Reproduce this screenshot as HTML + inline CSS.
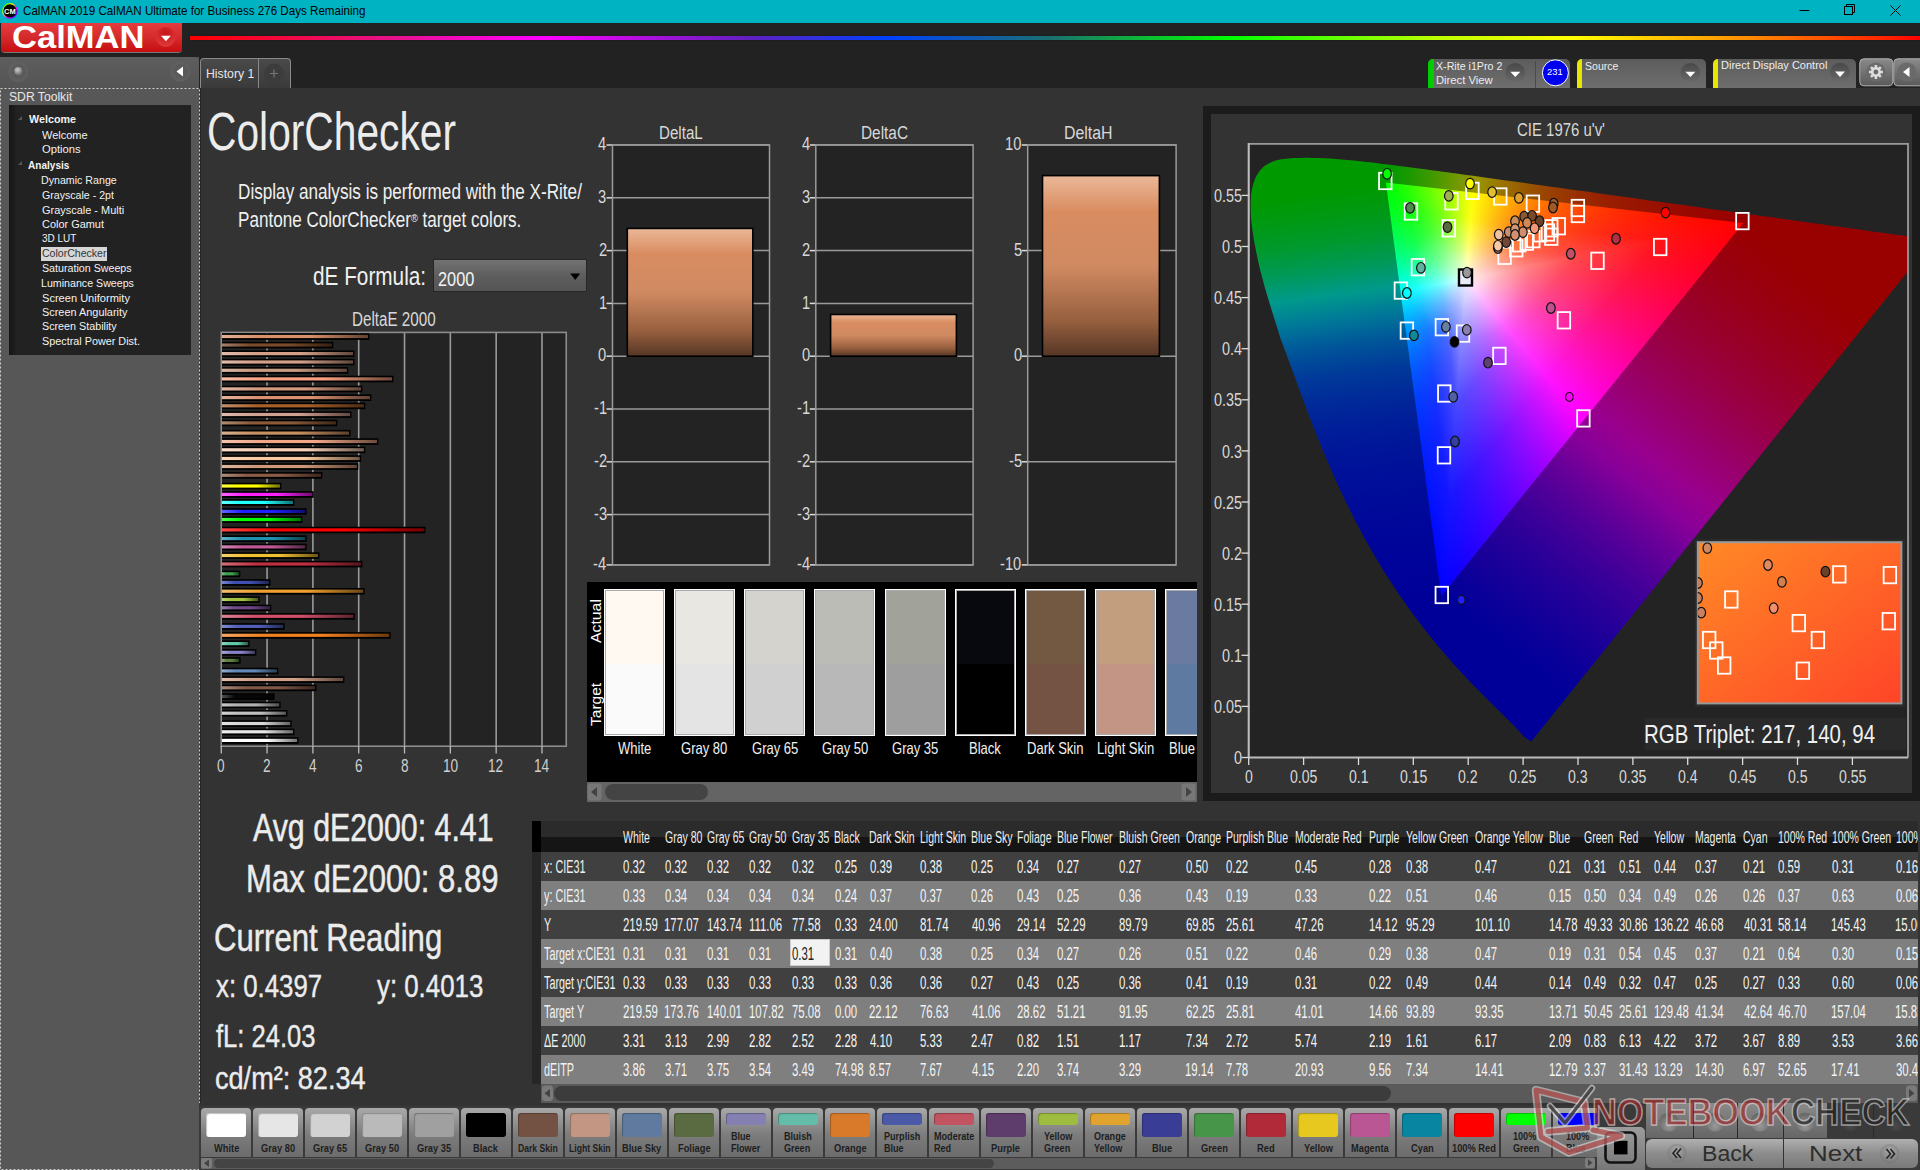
<!DOCTYPE html><html><head><meta charset="utf-8"><style>
html,body{margin:0;padding:0;width:1920px;height:1170px;overflow:hidden;background:#333;font-family:"Liberation Sans",sans-serif}
.t{position:absolute;white-space:nowrap;line-height:1;transform-origin:0 0}
.a{position:absolute}
</style></head><body>
<div style="position:absolute;left:0px;top:0px;width:1920px;height:23px;background:#00b3c3"></div>
<svg class="a" style="left:0;top:0" width="30" height="23"><defs><linearGradient id="ring" x1="0" y1="0" x2="1" y2="1"><stop offset="0" stop-color="#0f0"/><stop offset=".35" stop-color="#ff0"/><stop offset=".6" stop-color="#f0f"/><stop offset="1" stop-color="#00f"/></linearGradient></defs><circle cx="9.9" cy="10.9" r="7.2" fill="#000" stroke="url(#ring)" stroke-width="1.2"/><text x="9.9" y="13.6" font-family="Liberation Sans" font-weight="bold" font-size="7.5" fill="#fff" text-anchor="middle">CM</text></svg>
<div class="t" style="left:23.42px;top:5.71px;font-size:11.92px;transform:scaleX(0.9747);color:#000;">CalMAN 2019 CalMAN Ultimate for Business 276 Days Remaining</div>
<svg class="a" style="left:1790px;top:0" width="130" height="23"><g stroke="#000" stroke-width="1" fill="none"><line x1="1799.5" y1="10.5" x2="1809.5" y2="10.5" transform="translate(-1790,0)"/><rect x="54.5" y="6.5" width="8" height="8"/><path d="M56.5 6.5 V4.5 H64.5 V12.5 H62.5"/><path d="M100.5 5.5 L110.5 15.5 M110.5 5.5 L100.5 15.5"/></g></svg>
<div style="position:absolute;left:0px;top:23px;width:1920px;height:35px;background:#222"></div>
<div style="position:absolute;left:1px;top:23px;width:181px;height:29px;background:linear-gradient(#e53c3e,#d42a2c 50%,#c70d0f);border-radius:0 0 4px 4px;box-shadow:0 1px 0 #777"></div>
<div class="t" style="left:12.12px;top:21.65px;font-size:31.25px;transform:scaleX(1.1056);color:#fff;font-weight:bold;">CalMAN</div>
<svg class="a" style="left:150px;top:24px" width="32" height="28"><defs><radialGradient id="dd" cx=".5" cy=".3" r=".7"><stop offset="0" stop-color="#c8141a"/><stop offset="1" stop-color="#e03a3c"/></radialGradient></defs><circle cx="15.6" cy="13" r="9.9" fill="url(#dd)"/><path d="M11 11.8 H20.8 L15.9 17.2Z" fill="#fff"/></svg>
<div style="position:absolute;left:190px;top:36px;width:1730px;height:4px;background:linear-gradient(to right,#f00 0px,#e8128a 200px,#f0f 352px,#6020c0 560px,#0040ff 697px,#1a7070 860px,#00ff00 1041px,#c0ff00 1250px,#ffff00 1381px,#ff9900 1540px,#ff2000 1700px,#f00 1730px);box-shadow:0 0 1px #000"></div>
<div style="position:absolute;left:0px;top:57px;width:199px;height:1113px;background:#575757"></div>
<div style="position:absolute;left:0px;top:57px;width:199px;height:31px;background:linear-gradient(#5e5e5e,#545454);border-radius:0 6px 0 0"></div>
<svg class="a" style="left:0;top:57px" width="200" height="31"><defs><radialGradient id="ball" cx=".4" cy=".35" r=".6"><stop offset="0" stop-color="#ccc"/><stop offset="1" stop-color="#777"/></radialGradient><radialGradient id="cb" cx=".5" cy=".5" r=".5"><stop offset=".6" stop-color="#5a5a5a"/><stop offset="1" stop-color="#626262"/></radialGradient></defs><circle cx="18.5" cy="15" r="10" fill="url(#cb)"/><circle cx="18.3" cy="14" r="4" fill="url(#ball)"/><circle cx="180.5" cy="14.5" r="10" fill="url(#cb)"/><path d="M176.5 14.5 L183 9.5 V19.5Z" fill="#fff"/></svg>
<div class="t" style="left:8.55px;top:90.30px;font-size:13.23px;transform:scaleX(0.9196);color:#e8e8e8;">SDR Toolkit</div>
<div style="position:absolute;left:9px;top:105px;width:182px;height:250px;background:linear-gradient(to right,#151515,#222 8px,#222)"></div>
<div class="t" style="left:28.70px;top:114.45px;font-size:11.05px;transform:scaleX(0.9741);color:#f2f2f2;font-weight:bold;">Welcome</div>
<div class="t" style="left:42.25px;top:130.45px;font-size:11.05px;transform:scaleX(0.9936);color:#f2f2f2;">Welcome</div>
<div class="t" style="left:41.79px;top:144.35px;font-size:11.05px;transform:scaleX(1.0169);color:#f2f2f2;">Options</div>
<div class="t" style="left:28.45px;top:159.65px;font-size:11.05px;transform:scaleX(0.9109);color:#f2f2f2;font-weight:bold;">Analysis</div>
<div class="t" style="left:41.45px;top:175.45px;font-size:11.05px;transform:scaleX(0.9635);color:#f2f2f2;">Dynamic Range</div>
<div class="t" style="left:41.77px;top:189.55px;font-size:11.05px;transform:scaleX(0.9598);color:#f2f2f2;">Grayscale - 2pt</div>
<div class="t" style="left:41.75px;top:204.65px;font-size:11.05px;transform:scaleX(0.9917);color:#f2f2f2;">Grayscale - Multi</div>
<div class="t" style="left:41.75px;top:219.45px;font-size:11.05px;transform:scaleX(0.9892);color:#f2f2f2;">Color Gamut</div>
<div class="t" style="left:41.90px;top:233.35px;font-size:11.05px;transform:scaleX(0.9013);color:#f2f2f2;">3D LUT</div>
<div style="position:absolute;left:40.7px;top:247px;width:66.5px;height:13.6px;background:#d6d6d6"></div>
<div class="t" style="left:41.77px;top:248.15px;font-size:11.05px;transform:scaleX(0.9539);color:#333;">ColorChecker</div>
<div class="t" style="left:41.82px;top:263.25px;font-size:11.05px;transform:scaleX(0.9668);color:#f2f2f2;">Saturation Sweeps</div>
<div class="t" style="left:41.45px;top:277.65px;font-size:11.05px;transform:scaleX(0.9636);color:#f2f2f2;">Luminance Sweeps</div>
<div class="t" style="left:41.80px;top:292.65px;font-size:11.05px;transform:scaleX(1.0015);color:#f2f2f2;">Screen Uniformity</div>
<div class="t" style="left:41.81px;top:307.45px;font-size:11.05px;transform:scaleX(0.9871);color:#f2f2f2;">Screen Angularity</div>
<div class="t" style="left:41.82px;top:321.35px;font-size:11.05px;transform:scaleX(0.9728);color:#f2f2f2;">Screen Stability</div>
<div class="t" style="left:41.81px;top:336.25px;font-size:11.05px;transform:scaleX(0.9793);color:#f2f2f2;">Spectral Power Dist.</div>
<svg class="a" style="left:15px;top:112px" width="12" height="60"><path d="M7 8 L7 4 L3 8Z M7 53 L7 49 L3 53Z" fill="#555"/></svg>
<div style="position:absolute;left:199px;top:57px;width:1721px;height:31px;background:#222"></div>
<div style="position:absolute;left:199px;top:88px;width:1721px;height:1082px;background:#333"></div>
<div style="position:absolute;left:200px;top:88px;width:1px;height:1082px;background:#262626"></div>
<svg class="a" style="left:0;top:87px" width="201" height="1083"><rect x="0.5" y="1.5" width="199" height="1081" fill="none" stroke="#d0d0d0" stroke-width="1" stroke-dasharray="2 2"/></svg>
<div class="a" style="left:200px;top:58px;width:91px;height:30px;border:1px solid #8a8a8a;border-bottom:none;border-radius:4px 4px 0 0;background:linear-gradient(#4a4a4a,#3a3a3a);box-sizing:border-box"></div>
<div style="position:absolute;left:258px;top:59px;width:1px;height:29px;background:#8a8a8a"></div>
<div class="t" style="left:205.52px;top:67.89px;font-size:12.06px;transform:scaleX(1.0177);color:#e6e6e6;">History 1</div>
<svg class="a" style="left:259px;top:58px" width="32" height="30"><circle cx="15" cy="15.5" r="10" fill="#3c3c3c"/><path d="M15 11.5 V19.5 M11 15.5 H19" stroke="#777" stroke-width="1.2"/></svg>
<div class="a" style="left:1428.3px;top:58.5px;width:142.20000000000005px;height:29.5px;border-radius:5px 5px 0 0;background:linear-gradient(#5c5c5c,#6e6e6e);overflow:hidden"><div class="a" style="left:0;top:0;width:5.5px;height:100%;background:#0c0"></div></div>
<div class="a" style="left:1576.8px;top:58.5px;width:129.5px;height:29.5px;border-radius:5px 5px 0 0;background:linear-gradient(#5c5c5c,#6e6e6e);overflow:hidden"><div class="a" style="left:0;top:0;width:5.5px;height:100%;background:#e6e600"></div></div>
<div class="a" style="left:1712.8px;top:58.5px;width:143.0px;height:29.5px;border-radius:5px 5px 0 0;background:linear-gradient(#5c5c5c,#6e6e6e);overflow:hidden"><div class="a" style="left:0;top:0;width:5.5px;height:100%;background:#e6e600"></div></div>
<div style="position:absolute;left:1534.5px;top:61px;width:1.5px;height:27px;background:#4a4a4a"></div>
<div class="t" style="left:1436.43px;top:60.67px;font-size:10.90px;transform:scaleX(0.9785);color:#eee;">X-Rite i1Pro 2</div>
<div class="t" style="left:1435.80px;top:74.52px;font-size:10.61px;transform:scaleX(1.0584);color:#eee;">Direct View</div>
<div class="t" style="left:1585.13px;top:60.67px;font-size:10.90px;transform:scaleX(0.9666);color:#eee;">Source</div>
<div class="t" style="left:1720.92px;top:60.33px;font-size:11.19px;transform:scaleX(0.9831);color:#eee;">Direct Display Control</div>
<svg class="a" style="left:1400px;top:50px" width="520" height="40" viewBox="1400 50 520 40"><defs><linearGradient id="ddg" x1="0" y1="0" x2="0" y2="1"><stop offset="0" stop-color="#484848"/><stop offset="1" stop-color="#6a6a6a"/></linearGradient><linearGradient id="btg" x1="0" y1="0" x2="0" y2="1"><stop offset="0" stop-color="#8a8a8a"/><stop offset="1" stop-color="#5a5a5a"/></linearGradient></defs><circle cx="1515.3" cy="72.8" r="9.9" fill="url(#ddg)"/><path d="M1510.3 71.8 H1520.3 L1515.3 77.1Z" fill="#fff"/><circle cx="1690.4" cy="72.8" r="9.9" fill="url(#ddg)"/><path d="M1685.4 71.8 H1695.4 L1690.4 77.1Z" fill="#fff"/><circle cx="1840" cy="72.6" r="9.9" fill="url(#ddg)"/><path d="M1835 71.6 H1845 L1840 76.89999999999999Z" fill="#fff"/><circle cx="1555.4" cy="72.8" r="13" fill="#0000f0" stroke="#fff" stroke-width="1"/><rect x="1859.8" y="58.8" width="33" height="27" rx="4" fill="url(#btg)" stroke="#b0b0b0" stroke-width="1"/><rect x="1893.8" y="58.8" width="30" height="27" rx="4" fill="url(#btg)" stroke="#b0b0b0" stroke-width="1"/><circle cx="1875.9" cy="72" r="9.5" fill="#6a6a6a"/><circle cx="1906.8" cy="72" r="9.5" fill="#6a6a6a"/><g fill="#ddd"><circle cx="1875.9" cy="72" r="5"/><rect x="1874.6" y="65" width="2.6" height="3" transform="rotate(0 1875.9 72)"/><rect x="1874.6" y="65" width="2.6" height="3" transform="rotate(45 1875.9 72)"/><rect x="1874.6" y="65" width="2.6" height="3" transform="rotate(90 1875.9 72)"/><rect x="1874.6" y="65" width="2.6" height="3" transform="rotate(135 1875.9 72)"/><rect x="1874.6" y="65" width="2.6" height="3" transform="rotate(180 1875.9 72)"/><rect x="1874.6" y="65" width="2.6" height="3" transform="rotate(225 1875.9 72)"/><rect x="1874.6" y="65" width="2.6" height="3" transform="rotate(270 1875.9 72)"/><rect x="1874.6" y="65" width="2.6" height="3" transform="rotate(315 1875.9 72)"/></g><circle cx="1875.9" cy="72" r="2.4" fill="#6a6a6a"/><path d="M1903 72 L1909.5 67 V77Z" fill="#fff"/></svg>
<div class="t" style="left:1547.43px;top:68.49px;font-size:8.87px;transform:scaleX(1.0632);color:#fff;">231</div>
<div class="t" style="left:207.36px;top:104.75px;font-size:53.92px;transform:scaleX(0.7559);color:#ececec;">ColorChecker</div>
<div class="t" style="left:238.23px;top:180.85px;font-size:21.15px;transform:scaleX(0.8108);color:#f0f0f0;">Display analysis is performed with the X-Rite/</div>
<div class="t" style="left:238.23px;top:209.00px;font-size:21.15px;transform:scaleX(0.8084);color:#f0f0f0;">Pantone ColorChecker<span style="font-size:55%;vertical-align:45%">®</span> target colors.</div>
<div class="t" style="left:313.37px;top:262.53px;font-size:26.31px;transform:scaleX(0.7895);color:#f0f0f0;">dE Formula:</div>
<div class="a" style="left:432.5px;top:259.4px;width:154px;height:32.8px;box-sizing:border-box;border:1.5px solid #262626;background:linear-gradient(#727272,#5e5e5e 50%,#555)"></div>
<div class="t" style="left:437.68px;top:268.75px;font-size:20.49px;transform:scaleX(0.7980);color:#f4f4f4;">2000</div>
<svg class="a" style="left:565px;top:269.5px" width="20" height="16"><path d="M5.2 3.5 H15.2 L10.2 10Z" fill="#000"/></svg>
<div class="t" style="left:351.78px;top:309.64px;font-size:19.91px;transform:scaleX(0.7640);color:#d8d8d8;">DeltaE 2000</div>
<div style="position:absolute;left:221px;top:331.6px;width:345.3px;height:414.6px;background:#232323"></div>
<svg class="a" style="left:200px;top:320px" width="380" height="440" viewBox="200 320 380 440"><line x1="267.07" y1="332" x2="267.07" y2="746" stroke="#9a9a9a" stroke-width="1.6"/><line x1="312.89" y1="332" x2="312.89" y2="746" stroke="#9a9a9a" stroke-width="1.6"/><line x1="358.71" y1="332" x2="358.71" y2="746" stroke="#9a9a9a" stroke-width="1.6"/><line x1="404.53" y1="332" x2="404.53" y2="746" stroke="#9a9a9a" stroke-width="1.6"/><line x1="450.35" y1="332" x2="450.35" y2="746" stroke="#9a9a9a" stroke-width="1.6"/><line x1="496.17" y1="332" x2="496.17" y2="746" stroke="#9a9a9a" stroke-width="1.6"/><line x1="541.99" y1="332" x2="541.99" y2="746" stroke="#9a9a9a" stroke-width="1.6"/><rect x="221.25" y="332.4" width="345" height="413.8" fill="none" stroke="#8c8c8c" stroke-width="1.6"/><line x1="221.25" y1="746" x2="221.25" y2="753.5" stroke="#bbb" stroke-width="1.3"/><line x1="267.07" y1="746" x2="267.07" y2="753.5" stroke="#bbb" stroke-width="1.3"/><line x1="312.89" y1="746" x2="312.89" y2="753.5" stroke="#bbb" stroke-width="1.3"/><line x1="358.71" y1="746" x2="358.71" y2="753.5" stroke="#bbb" stroke-width="1.3"/><line x1="404.53" y1="746" x2="404.53" y2="753.5" stroke="#bbb" stroke-width="1.3"/><line x1="450.35" y1="746" x2="450.35" y2="753.5" stroke="#bbb" stroke-width="1.3"/><line x1="496.17" y1="746" x2="496.17" y2="753.5" stroke="#bbb" stroke-width="1.3"/><line x1="541.99" y1="746" x2="541.99" y2="753.5" stroke="#bbb" stroke-width="1.3"/><defs><linearGradient id="bg0"><stop offset="0" stop-color="#e4b197"/><stop offset=".25" stop-color="#d8906a"/><stop offset=".6" stop-color="#d8906a"/><stop offset="1" stop-color="#614130"/></linearGradient><linearGradient id="bg1"><stop offset="0" stop-color="#a2806a"/><stop offset=".25" stop-color="#7a4a2a"/><stop offset=".6" stop-color="#7a4a2a"/><stop offset="1" stop-color="#372113"/></linearGradient><linearGradient id="bg2"><stop offset="0" stop-color="#e1bcac"/><stop offset=".25" stop-color="#d4a088"/><stop offset=".6" stop-color="#d4a088"/><stop offset="1" stop-color="#5f483d"/></linearGradient><linearGradient id="bg3"><stop offset="0" stop-color="#e1bcac"/><stop offset=".25" stop-color="#d4a088"/><stop offset=".6" stop-color="#d4a088"/><stop offset="1" stop-color="#5f483d"/></linearGradient><linearGradient id="bg4"><stop offset="0" stop-color="#d8b8a6"/><stop offset=".25" stop-color="#c89a80"/><stop offset=".6" stop-color="#c89a80"/><stop offset="1" stop-color="#5a453a"/></linearGradient><linearGradient id="bg5"><stop offset="0" stop-color="#fabca6"/><stop offset=".25" stop-color="#f8a080"/><stop offset=".6" stop-color="#f8a080"/><stop offset="1" stop-color="#70483a"/></linearGradient><linearGradient id="bg6"><stop offset="0" stop-color="#e1b8a6"/><stop offset=".25" stop-color="#d49a80"/><stop offset=".6" stop-color="#d49a80"/><stop offset="1" stop-color="#5f453a"/></linearGradient><linearGradient id="bg7"><stop offset="0" stop-color="#e4b19b"/><stop offset=".25" stop-color="#d89070"/><stop offset=".6" stop-color="#d89070"/><stop offset="1" stop-color="#614132"/></linearGradient><linearGradient id="bg8"><stop offset="0" stop-color="#c2906a"/><stop offset=".25" stop-color="#a8602a"/><stop offset=".6" stop-color="#a8602a"/><stop offset="1" stop-color="#4c2b13"/></linearGradient><linearGradient id="bg9"><stop offset="0" stop-color="#debcb1"/><stop offset=".25" stop-color="#d0a090"/><stop offset=".6" stop-color="#d0a090"/><stop offset="1" stop-color="#5e4841"/></linearGradient><linearGradient id="bg10"><stop offset="0" stop-color="#ad8c74"/><stop offset=".25" stop-color="#8a5a38"/><stop offset=".6" stop-color="#8a5a38"/><stop offset="1" stop-color="#3e2819"/></linearGradient><linearGradient id="bg11"><stop offset="0" stop-color="#d8b190"/><stop offset=".25" stop-color="#c89060"/><stop offset=".6" stop-color="#c89060"/><stop offset="1" stop-color="#5a412b"/></linearGradient><linearGradient id="bg12"><stop offset="0" stop-color="#f4c2ac"/><stop offset=".25" stop-color="#f0a888"/><stop offset=".6" stop-color="#f0a888"/><stop offset="1" stop-color="#6c4c3d"/></linearGradient><linearGradient id="bg13"><stop offset="0" stop-color="#fadecd"/><stop offset=".25" stop-color="#f8d0b8"/><stop offset=".6" stop-color="#f8d0b8"/><stop offset="1" stop-color="#705e53"/></linearGradient><linearGradient id="bg14"><stop offset="0" stop-color="#fad8bc"/><stop offset=".25" stop-color="#f8c8a0"/><stop offset=".6" stop-color="#f8c8a0"/><stop offset="1" stop-color="#705a48"/></linearGradient><linearGradient id="bg15"><stop offset="0" stop-color="#deb7a0"/><stop offset=".25" stop-color="#d09878"/><stop offset=".6" stop-color="#d09878"/><stop offset="1" stop-color="#5e4436"/></linearGradient><linearGradient id="bg16"><stop offset="0" stop-color="#ad8c7d"/><stop offset=".25" stop-color="#8a5a45"/><stop offset=".6" stop-color="#8a5a45"/><stop offset="1" stop-color="#3e281f"/></linearGradient><linearGradient id="bg17"><stop offset="0" stop-color="#ffff4c"/><stop offset=".25" stop-color="#ffff00"/><stop offset=".6" stop-color="#ffff00"/><stop offset="1" stop-color="#737300"/></linearGradient><linearGradient id="bg18"><stop offset="0" stop-color="#ff63ff"/><stop offset=".25" stop-color="#ff20ff"/><stop offset=".6" stop-color="#ff20ff"/><stop offset="1" stop-color="#730e73"/></linearGradient><linearGradient id="bg19"><stop offset="0" stop-color="#63ffff"/><stop offset=".25" stop-color="#20ffff"/><stop offset=".6" stop-color="#20ffff"/><stop offset="1" stop-color="#0e7373"/></linearGradient><linearGradient id="bg20"><stop offset="0" stop-color="#6363ff"/><stop offset=".25" stop-color="#2020ff"/><stop offset=".6" stop-color="#2020ff"/><stop offset="1" stop-color="#0e0e73"/></linearGradient><linearGradient id="bg21"><stop offset="0" stop-color="#4cff4c"/><stop offset=".25" stop-color="#00ff00"/><stop offset=".6" stop-color="#00ff00"/><stop offset="1" stop-color="#007300"/></linearGradient><linearGradient id="bg22"><stop offset="0" stop-color="#ff4c4c"/><stop offset=".25" stop-color="#ff0000"/><stop offset=".6" stop-color="#ff0000"/><stop offset="1" stop-color="#730000"/></linearGradient><linearGradient id="bg23"><stop offset="0" stop-color="#63b1c8"/><stop offset=".25" stop-color="#2090b0"/><stop offset=".6" stop-color="#2090b0"/><stop offset="1" stop-color="#0e414f"/></linearGradient><linearGradient id="bg24"><stop offset="0" stop-color="#d38ab7"/><stop offset=".25" stop-color="#c05898"/><stop offset=".6" stop-color="#c05898"/><stop offset="1" stop-color="#562844"/></linearGradient><linearGradient id="bg25"><stop offset="0" stop-color="#f4d36e"/><stop offset=".25" stop-color="#f0c030"/><stop offset=".6" stop-color="#f0c030"/><stop offset="1" stop-color="#6c5616"/></linearGradient><linearGradient id="bg26"><stop offset="0" stop-color="#d36e79"/><stop offset=".25" stop-color="#c03040"/><stop offset=".6" stop-color="#c03040"/><stop offset="1" stop-color="#56161d"/></linearGradient><linearGradient id="bg27"><stop offset="0" stop-color="#79bc84"/><stop offset=".25" stop-color="#40a050"/><stop offset=".6" stop-color="#40a050"/><stop offset="1" stop-color="#1d4824"/></linearGradient><linearGradient id="bg28"><stop offset="0" stop-color="#7984c8"/><stop offset=".25" stop-color="#4050b0"/><stop offset=".6" stop-color="#4050b0"/><stop offset="1" stop-color="#1d244f"/></linearGradient><linearGradient id="bg29"><stop offset="0" stop-color="#f4bc6e"/><stop offset=".25" stop-color="#f0a030"/><stop offset=".6" stop-color="#f0a030"/><stop offset="1" stop-color="#6c4816"/></linearGradient><linearGradient id="bg30"><stop offset="0" stop-color="#bcd379"/><stop offset=".25" stop-color="#a0c040"/><stop offset=".6" stop-color="#a0c040"/><stop offset="1" stop-color="#48561d"/></linearGradient><linearGradient id="bg31"><stop offset="0" stop-color="#9b7fac"/><stop offset=".25" stop-color="#704888"/><stop offset=".6" stop-color="#704888"/><stop offset="1" stop-color="#32203d"/></linearGradient><linearGradient id="bg32"><stop offset="0" stop-color="#de8495"/><stop offset=".25" stop-color="#d05068"/><stop offset=".6" stop-color="#d05068"/><stop offset="1" stop-color="#5e242f"/></linearGradient><linearGradient id="bg33"><stop offset="0" stop-color="#8490cd"/><stop offset=".25" stop-color="#5060b8"/><stop offset=".6" stop-color="#5060b8"/><stop offset="1" stop-color="#242b53"/></linearGradient><linearGradient id="bg34"><stop offset="0" stop-color="#f4a663"/><stop offset=".25" stop-color="#f08020"/><stop offset=".6" stop-color="#f08020"/><stop offset="1" stop-color="#6c3a0e"/></linearGradient><linearGradient id="bg35"><stop offset="0" stop-color="#90d8c2"/><stop offset=".25" stop-color="#60c8a8"/><stop offset=".6" stop-color="#60c8a8"/><stop offset="1" stop-color="#2b5a4c"/></linearGradient><linearGradient id="bg36"><stop offset="0" stop-color="#aca6d8"/><stop offset=".25" stop-color="#8880c8"/><stop offset=".6" stop-color="#8880c8"/><stop offset="1" stop-color="#3d3a5a"/></linearGradient><linearGradient id="bg37"><stop offset="0" stop-color="#90a679"/><stop offset=".25" stop-color="#608040"/><stop offset=".6" stop-color="#608040"/><stop offset="1" stop-color="#2b3a1d"/></linearGradient><linearGradient id="bg38"><stop offset="0" stop-color="#90accd"/><stop offset=".25" stop-color="#6088b8"/><stop offset=".6" stop-color="#6088b8"/><stop offset="1" stop-color="#2b3d53"/></linearGradient><linearGradient id="bg39"><stop offset="0" stop-color="#debcac"/><stop offset=".25" stop-color="#d0a088"/><stop offset=".6" stop-color="#d0a088"/><stop offset="1" stop-color="#5e483d"/></linearGradient><linearGradient id="bg40"><stop offset="0" stop-color="#a68a7f"/><stop offset=".25" stop-color="#805848"/><stop offset=".6" stop-color="#805848"/><stop offset="1" stop-color="#3a2820"/></linearGradient><linearGradient id="bg41"><stop offset="0" stop-color="#525252"/><stop offset=".25" stop-color="#080808"/><stop offset=".6" stop-color="#080808"/><stop offset="1" stop-color="#040404"/></linearGradient><linearGradient id="bg42"><stop offset="0" stop-color="#c8c8c8"/><stop offset=".25" stop-color="#b0b0b0"/><stop offset=".6" stop-color="#b0b0b0"/><stop offset="1" stop-color="#4f4f4f"/></linearGradient><linearGradient id="bg43"><stop offset="0" stop-color="#d3d3d3"/><stop offset=".25" stop-color="#c0c0c0"/><stop offset=".6" stop-color="#c0c0c0"/><stop offset="1" stop-color="#565656"/></linearGradient><linearGradient id="bg44"><stop offset="0" stop-color="#e4e4e4"/><stop offset=".25" stop-color="#d8d8d8"/><stop offset=".6" stop-color="#d8d8d8"/><stop offset="1" stop-color="#616161"/></linearGradient><linearGradient id="bg45"><stop offset="0" stop-color="#efefef"/><stop offset=".25" stop-color="#e8e8e8"/><stop offset=".6" stop-color="#e8e8e8"/><stop offset="1" stop-color="#686868"/></linearGradient><linearGradient id="bg46"><stop offset="0" stop-color="#ffffff"/><stop offset=".25" stop-color="#ffffff"/><stop offset=".6" stop-color="#ffffff"/><stop offset="1" stop-color="#737373"/></linearGradient></defs><rect x="222" y="333.30" width="147.40" height="6.6" fill="#000"/><rect x="222" y="334.90" width="146.00" height="3.2" fill="url(#bg0)"/><rect x="222" y="341.80" width="111.30" height="6.6" fill="#000"/><rect x="222" y="343.40" width="109.90" height="3.2" fill="url(#bg1)"/><rect x="222" y="350.40" width="132.40" height="6.6" fill="#000"/><rect x="222" y="352.00" width="131.00" height="3.2" fill="url(#bg2)"/><rect x="222" y="358.80" width="132.40" height="6.6" fill="#000"/><rect x="222" y="360.40" width="131.00" height="3.2" fill="url(#bg3)"/><rect x="222" y="367.10" width="126.30" height="6.6" fill="#000"/><rect x="222" y="368.70" width="124.90" height="3.2" fill="url(#bg4)"/><rect x="222" y="375.70" width="171.40" height="6.6" fill="#000"/><rect x="222" y="377.30" width="170.00" height="3.2" fill="url(#bg5)"/><rect x="222" y="385.70" width="140.40" height="6.6" fill="#000"/><rect x="222" y="387.30" width="139.00" height="3.2" fill="url(#bg6)"/><rect x="222" y="394.40" width="149.40" height="6.6" fill="#000"/><rect x="222" y="396.00" width="148.00" height="3.2" fill="url(#bg7)"/><rect x="222" y="402.60" width="143.30" height="6.6" fill="#000"/><rect x="222" y="404.20" width="141.90" height="3.2" fill="url(#bg8)"/><rect x="222" y="411.30" width="129.50" height="6.6" fill="#000"/><rect x="222" y="412.90" width="128.10" height="3.2" fill="url(#bg9)"/><rect x="222" y="419.70" width="115.40" height="6.6" fill="#000"/><rect x="222" y="421.30" width="114.00" height="3.2" fill="url(#bg10)"/><rect x="222" y="429.90" width="128.50" height="6.6" fill="#000"/><rect x="222" y="431.50" width="127.10" height="3.2" fill="url(#bg11)"/><rect x="222" y="438.30" width="156.40" height="6.6" fill="#000"/><rect x="222" y="439.90" width="155.00" height="3.2" fill="url(#bg12)"/><rect x="222" y="446.60" width="143.30" height="6.6" fill="#000"/><rect x="222" y="448.20" width="141.90" height="3.2" fill="url(#bg13)"/><rect x="222" y="455.30" width="139.10" height="6.6" fill="#000"/><rect x="222" y="456.90" width="137.70" height="3.2" fill="url(#bg14)"/><rect x="222" y="463.30" width="136.30" height="6.6" fill="#000"/><rect x="222" y="464.90" width="134.90" height="3.2" fill="url(#bg15)"/><rect x="222" y="472.10" width="100.40" height="6.6" fill="#000"/><rect x="222" y="473.70" width="99.00" height="3.2" fill="url(#bg16)"/><rect x="222" y="482.80" width="59.40" height="6.6" fill="#000"/><rect x="222" y="484.40" width="58.00" height="3.2" fill="url(#bg17)"/><rect x="222" y="491.20" width="91.70" height="6.6" fill="#000"/><rect x="222" y="492.80" width="90.30" height="3.2" fill="url(#bg18)"/><rect x="222" y="499.20" width="72.40" height="6.6" fill="#000"/><rect x="222" y="500.80" width="71.00" height="3.2" fill="url(#bg19)"/><rect x="222" y="508.20" width="84.60" height="6.6" fill="#000"/><rect x="222" y="509.80" width="83.20" height="3.2" fill="url(#bg20)"/><rect x="222" y="516.30" width="80.50" height="6.6" fill="#000"/><rect x="222" y="517.90" width="79.10" height="3.2" fill="url(#bg21)"/><rect x="222" y="526.70" width="203.50" height="6.6" fill="#000"/><rect x="222" y="528.30" width="202.10" height="3.2" fill="url(#bg22)"/><rect x="222" y="535.40" width="84.60" height="6.6" fill="#000"/><rect x="222" y="537.00" width="83.20" height="3.2" fill="url(#bg23)"/><rect x="222" y="543.70" width="84.60" height="6.6" fill="#000"/><rect x="222" y="545.30" width="83.20" height="3.2" fill="url(#bg24)"/><rect x="222" y="552.30" width="97.40" height="6.6" fill="#000"/><rect x="222" y="553.90" width="96.00" height="3.2" fill="url(#bg25)"/><rect x="222" y="560.80" width="140.40" height="6.6" fill="#000"/><rect x="222" y="562.40" width="139.00" height="3.2" fill="url(#bg26)"/><rect x="222" y="570.60" width="18.30" height="6.6" fill="#000"/><rect x="222" y="572.20" width="16.90" height="3.2" fill="url(#bg27)"/><rect x="222" y="579.20" width="48.50" height="6.6" fill="#000"/><rect x="222" y="580.80" width="47.10" height="3.2" fill="url(#bg28)"/><rect x="222" y="588.00" width="142.60" height="6.6" fill="#000"/><rect x="222" y="589.60" width="141.20" height="3.2" fill="url(#bg29)"/><rect x="222" y="596.30" width="37.60" height="6.6" fill="#000"/><rect x="222" y="597.90" width="36.20" height="3.2" fill="url(#bg30)"/><rect x="222" y="604.60" width="49.40" height="6.6" fill="#000"/><rect x="222" y="606.20" width="48.00" height="3.2" fill="url(#bg31)"/><rect x="222" y="613.10" width="132.70" height="6.6" fill="#000"/><rect x="222" y="614.70" width="131.30" height="3.2" fill="url(#bg32)"/><rect x="222" y="623.20" width="62.60" height="6.6" fill="#000"/><rect x="222" y="624.80" width="61.20" height="3.2" fill="url(#bg33)"/><rect x="222" y="632.10" width="168.60" height="6.6" fill="#000"/><rect x="222" y="633.70" width="167.20" height="3.2" fill="url(#bg34)"/><rect x="222" y="640.40" width="27.60" height="6.6" fill="#000"/><rect x="222" y="642.00" width="26.20" height="3.2" fill="url(#bg35)"/><rect x="222" y="649.10" width="34.40" height="6.6" fill="#000"/><rect x="222" y="650.70" width="33.00" height="3.2" fill="url(#bg36)"/><rect x="222" y="657.20" width="18.60" height="6.6" fill="#000"/><rect x="222" y="658.80" width="17.20" height="3.2" fill="url(#bg37)"/><rect x="222" y="667.70" width="56.40" height="6.6" fill="#000"/><rect x="222" y="669.30" width="55.00" height="3.2" fill="url(#bg38)"/><rect x="222" y="676.30" width="122.40" height="6.6" fill="#000"/><rect x="222" y="677.90" width="121.00" height="3.2" fill="url(#bg39)"/><rect x="222" y="684.60" width="94.50" height="6.6" fill="#000"/><rect x="222" y="686.20" width="93.10" height="3.2" fill="url(#bg40)"/><rect x="222" y="693.30" width="52.60" height="6.6" fill="#000"/><rect x="222" y="694.90" width="51.20" height="3.2" fill="url(#bg41)"/><rect x="222" y="701.70" width="58.60" height="6.6" fill="#000"/><rect x="222" y="703.30" width="57.20" height="3.2" fill="url(#bg42)"/><rect x="222" y="710.00" width="65.40" height="6.6" fill="#000"/><rect x="222" y="711.60" width="64.00" height="3.2" fill="url(#bg43)"/><rect x="222" y="720.30" width="69.60" height="6.6" fill="#000"/><rect x="222" y="721.90" width="68.20" height="3.2" fill="url(#bg44)"/><rect x="222" y="728.60" width="72.40" height="6.6" fill="#000"/><rect x="222" y="730.20" width="71.00" height="3.2" fill="url(#bg45)"/><rect x="222" y="737.20" width="76.50" height="6.6" fill="#000"/><rect x="222" y="738.80" width="75.10" height="3.2" fill="url(#bg46)"/></svg>
<div class="t" style="left:217.43px;top:758.00px;font-size:17.48px;transform:scaleX(0.7800);color:#cfcfcf;">0</div>
<div class="t" style="left:263.29px;top:758.00px;font-size:17.48px;transform:scaleX(0.7800);color:#cfcfcf;">2</div>
<div class="t" style="left:309.14px;top:758.00px;font-size:17.48px;transform:scaleX(0.7800);color:#cfcfcf;">4</div>
<div class="t" style="left:354.86px;top:758.00px;font-size:17.48px;transform:scaleX(0.7800);color:#cfcfcf;">6</div>
<div class="t" style="left:400.71px;top:758.00px;font-size:17.48px;transform:scaleX(0.7800);color:#cfcfcf;">8</div>
<div class="t" style="left:442.51px;top:758.00px;font-size:17.48px;transform:scaleX(0.7800);color:#cfcfcf;">10</div>
<div class="t" style="left:488.43px;top:758.00px;font-size:17.48px;transform:scaleX(0.7800);color:#cfcfcf;">12</div>
<div class="t" style="left:534.08px;top:758.00px;font-size:17.48px;transform:scaleX(0.7800);color:#cfcfcf;">14</div>
<svg class="a" style="left:580px;top:100px" width="620" height="480" viewBox="580 100 620 480"><defs><linearGradient id="dbar" x1="0" y1="0" x2="0" y2="1"><stop offset="0" stop-color="#ebb898"/><stop offset=".2" stop-color="#d98c60"/><stop offset=".5" stop-color="#d08a62"/><stop offset=".8" stop-color="#98603f"/><stop offset="1" stop-color="#553625"/></linearGradient></defs><rect x="612.5" y="144.9" width="157.0" height="420.0" fill="#232323"/><line x1="612.5" y1="145.00" x2="769.5" y2="145.00" stroke="#9a9a9a" stroke-width="1.5"/><line x1="606.5" y1="145.00" x2="612.5" y2="145.00" stroke="#ddd" stroke-width="1.5"/><line x1="612.5" y1="197.80" x2="769.5" y2="197.80" stroke="#9a9a9a" stroke-width="1.5"/><line x1="606.5" y1="197.80" x2="612.5" y2="197.80" stroke="#ddd" stroke-width="1.5"/><line x1="612.5" y1="250.60" x2="769.5" y2="250.60" stroke="#9a9a9a" stroke-width="1.5"/><line x1="606.5" y1="250.60" x2="612.5" y2="250.60" stroke="#ddd" stroke-width="1.5"/><line x1="612.5" y1="303.40" x2="769.5" y2="303.40" stroke="#9a9a9a" stroke-width="1.5"/><line x1="606.5" y1="303.40" x2="612.5" y2="303.40" stroke="#ddd" stroke-width="1.5"/><line x1="612.5" y1="356.20" x2="769.5" y2="356.20" stroke="#9a9a9a" stroke-width="1.5"/><line x1="606.5" y1="356.20" x2="612.5" y2="356.20" stroke="#ddd" stroke-width="1.5"/><line x1="612.5" y1="409.00" x2="769.5" y2="409.00" stroke="#9a9a9a" stroke-width="1.5"/><line x1="606.5" y1="409.00" x2="612.5" y2="409.00" stroke="#ddd" stroke-width="1.5"/><line x1="612.5" y1="461.80" x2="769.5" y2="461.80" stroke="#9a9a9a" stroke-width="1.5"/><line x1="606.5" y1="461.80" x2="612.5" y2="461.80" stroke="#ddd" stroke-width="1.5"/><line x1="612.5" y1="514.60" x2="769.5" y2="514.60" stroke="#9a9a9a" stroke-width="1.5"/><line x1="606.5" y1="514.60" x2="612.5" y2="514.60" stroke="#ddd" stroke-width="1.5"/><line x1="612.5" y1="564.90" x2="769.5" y2="564.90" stroke="#9a9a9a" stroke-width="1.5"/><line x1="606.5" y1="564.90" x2="612.5" y2="564.90" stroke="#ddd" stroke-width="1.5"/><rect x="612.5" y="144.9" width="157.0" height="420.0" fill="none" stroke="#9a9a9a" stroke-width="1.5"/><rect x="627.3" y="228.42" width="125.50" height="127.78" fill="url(#dbar)" stroke="#000" stroke-width="1.6"/><rect x="815.8" y="144.9" width="157.30000000000007" height="420.0" fill="#232323"/><line x1="815.8" y1="145.00" x2="973.1" y2="145.00" stroke="#9a9a9a" stroke-width="1.5"/><line x1="809.8" y1="145.00" x2="815.8" y2="145.00" stroke="#ddd" stroke-width="1.5"/><line x1="815.8" y1="197.80" x2="973.1" y2="197.80" stroke="#9a9a9a" stroke-width="1.5"/><line x1="809.8" y1="197.80" x2="815.8" y2="197.80" stroke="#ddd" stroke-width="1.5"/><line x1="815.8" y1="250.60" x2="973.1" y2="250.60" stroke="#9a9a9a" stroke-width="1.5"/><line x1="809.8" y1="250.60" x2="815.8" y2="250.60" stroke="#ddd" stroke-width="1.5"/><line x1="815.8" y1="303.40" x2="973.1" y2="303.40" stroke="#9a9a9a" stroke-width="1.5"/><line x1="809.8" y1="303.40" x2="815.8" y2="303.40" stroke="#ddd" stroke-width="1.5"/><line x1="815.8" y1="356.20" x2="973.1" y2="356.20" stroke="#9a9a9a" stroke-width="1.5"/><line x1="809.8" y1="356.20" x2="815.8" y2="356.20" stroke="#ddd" stroke-width="1.5"/><line x1="815.8" y1="409.00" x2="973.1" y2="409.00" stroke="#9a9a9a" stroke-width="1.5"/><line x1="809.8" y1="409.00" x2="815.8" y2="409.00" stroke="#ddd" stroke-width="1.5"/><line x1="815.8" y1="461.80" x2="973.1" y2="461.80" stroke="#9a9a9a" stroke-width="1.5"/><line x1="809.8" y1="461.80" x2="815.8" y2="461.80" stroke="#ddd" stroke-width="1.5"/><line x1="815.8" y1="514.60" x2="973.1" y2="514.60" stroke="#9a9a9a" stroke-width="1.5"/><line x1="809.8" y1="514.60" x2="815.8" y2="514.60" stroke="#ddd" stroke-width="1.5"/><line x1="815.8" y1="564.90" x2="973.1" y2="564.90" stroke="#9a9a9a" stroke-width="1.5"/><line x1="809.8" y1="564.90" x2="815.8" y2="564.90" stroke="#ddd" stroke-width="1.5"/><rect x="815.8" y="144.9" width="157.30000000000007" height="420.0" fill="none" stroke="#9a9a9a" stroke-width="1.5"/><rect x="830.5999999999999" y="314.49" width="125.80" height="41.71" fill="url(#dbar)" stroke="#000" stroke-width="1.6"/><rect x="1027.7" y="144.9" width="148.39999999999986" height="420.0" fill="#232323"/><line x1="1027.7" y1="145.00" x2="1176.1" y2="145.00" stroke="#9a9a9a" stroke-width="1.5"/><line x1="1021.7" y1="145.00" x2="1027.7" y2="145.00" stroke="#ddd" stroke-width="1.5"/><line x1="1027.7" y1="250.60" x2="1176.1" y2="250.60" stroke="#9a9a9a" stroke-width="1.5"/><line x1="1021.7" y1="250.60" x2="1027.7" y2="250.60" stroke="#ddd" stroke-width="1.5"/><line x1="1027.7" y1="356.20" x2="1176.1" y2="356.20" stroke="#9a9a9a" stroke-width="1.5"/><line x1="1021.7" y1="356.20" x2="1027.7" y2="356.20" stroke="#ddd" stroke-width="1.5"/><line x1="1027.7" y1="461.80" x2="1176.1" y2="461.80" stroke="#9a9a9a" stroke-width="1.5"/><line x1="1021.7" y1="461.80" x2="1027.7" y2="461.80" stroke="#ddd" stroke-width="1.5"/><line x1="1027.7" y1="564.90" x2="1176.1" y2="564.90" stroke="#9a9a9a" stroke-width="1.5"/><line x1="1021.7" y1="564.90" x2="1027.7" y2="564.90" stroke="#ddd" stroke-width="1.5"/><rect x="1027.7" y="144.9" width="148.39999999999986" height="420.0" fill="none" stroke="#9a9a9a" stroke-width="1.5"/><rect x="1042.5" y="175.62" width="116.90" height="180.58" fill="url(#dbar)" stroke="#000" stroke-width="1.6"/></svg>
<div class="t" style="left:598.22px;top:136.24px;font-size:17.91px;transform:scaleX(0.8200);color:#d8d8d8;">4</div>
<div class="t" style="left:598.44px;top:189.04px;font-size:17.91px;transform:scaleX(0.8200);color:#d8d8d8;">3</div>
<div class="t" style="left:598.58px;top:241.84px;font-size:17.91px;transform:scaleX(0.8200);color:#d8d8d8;">2</div>
<div class="t" style="left:598.51px;top:294.64px;font-size:17.91px;transform:scaleX(0.8200);color:#d8d8d8;">1</div>
<div class="t" style="left:598.36px;top:347.44px;font-size:17.91px;transform:scaleX(0.8200);color:#d8d8d8;">0</div>
<div class="t" style="left:593.59px;top:400.24px;font-size:17.91px;transform:scaleX(0.8200);color:#d8d8d8;">-1</div>
<div class="t" style="left:593.66px;top:453.04px;font-size:17.91px;transform:scaleX(0.8200);color:#d8d8d8;">-2</div>
<div class="t" style="left:593.52px;top:505.84px;font-size:17.91px;transform:scaleX(0.8200);color:#d8d8d8;">-3</div>
<div class="t" style="left:593.30px;top:556.14px;font-size:17.91px;transform:scaleX(0.8200);color:#d8d8d8;">-4</div>
<div class="t" style="left:659.39px;top:122.66px;font-size:19.19px;transform:scaleX(0.7893);color:#d8d8d8;">DeltaL</div>
<div class="t" style="left:801.52px;top:136.24px;font-size:17.91px;transform:scaleX(0.8200);color:#d8d8d8;">4</div>
<div class="t" style="left:801.74px;top:189.04px;font-size:17.91px;transform:scaleX(0.8200);color:#d8d8d8;">3</div>
<div class="t" style="left:801.88px;top:241.84px;font-size:17.91px;transform:scaleX(0.8200);color:#d8d8d8;">2</div>
<div class="t" style="left:801.81px;top:294.64px;font-size:17.91px;transform:scaleX(0.8200);color:#d8d8d8;">1</div>
<div class="t" style="left:801.66px;top:347.44px;font-size:17.91px;transform:scaleX(0.8200);color:#d8d8d8;">0</div>
<div class="t" style="left:796.89px;top:400.24px;font-size:17.91px;transform:scaleX(0.8200);color:#d8d8d8;">-1</div>
<div class="t" style="left:796.96px;top:453.04px;font-size:17.91px;transform:scaleX(0.8200);color:#d8d8d8;">-2</div>
<div class="t" style="left:796.82px;top:505.84px;font-size:17.91px;transform:scaleX(0.8200);color:#d8d8d8;">-3</div>
<div class="t" style="left:796.60px;top:556.14px;font-size:17.91px;transform:scaleX(0.8200);color:#d8d8d8;">-4</div>
<div class="t" style="left:861.07px;top:122.66px;font-size:19.19px;transform:scaleX(0.8013);color:#d8d8d8;">DeltaC</div>
<div class="t" style="left:1005.41px;top:136.24px;font-size:17.91px;transform:scaleX(0.8200);color:#d8d8d8;">10</div>
<div class="t" style="left:1013.64px;top:241.84px;font-size:17.91px;transform:scaleX(0.8200);color:#d8d8d8;">5</div>
<div class="t" style="left:1013.56px;top:347.44px;font-size:17.91px;transform:scaleX(0.8200);color:#d8d8d8;">0</div>
<div class="t" style="left:1008.72px;top:453.04px;font-size:17.91px;transform:scaleX(0.8200);color:#d8d8d8;">-5</div>
<div class="t" style="left:1000.49px;top:556.14px;font-size:17.91px;transform:scaleX(0.8200);color:#d8d8d8;">-10</div>
<div class="t" style="left:1063.73px;top:122.66px;font-size:19.19px;transform:scaleX(0.8282);color:#d8d8d8;">DeltaH</div>
<div class="a" style="left:586.9px;top:581.9px;width:610px;height:200.5px;background:#000;overflow:hidden">
<div class="a" style="left:17.20px;top:7px;width:61px;height:147px;box-sizing:border-box;border:1px solid #fff;box-shadow:inset 0 0 0 1px #aaa;background:linear-gradient(#fff9f2 0,#fff9f2 74px,#fafafa 74px)"></div>
<div class="a" style="left:87.32px;top:7px;width:61px;height:147px;box-sizing:border-box;border:1px solid #fff;box-shadow:inset 0 0 0 1px #aaa;background:linear-gradient(#e8e7e2 0,#e8e7e2 74px,#e4e4e4 74px)"></div>
<div class="a" style="left:157.44px;top:7px;width:61px;height:147px;box-sizing:border-box;border:1px solid #fff;box-shadow:inset 0 0 0 1px #aaa;background:linear-gradient(#d4d3ce 0,#d4d3ce 74px,#d0d0d0 74px)"></div>
<div class="a" style="left:227.56px;top:7px;width:61px;height:147px;box-sizing:border-box;border:1px solid #fff;box-shadow:inset 0 0 0 1px #aaa;background:linear-gradient(#bbbcb5 0,#bbbcb5 74px,#b8b8b8 74px)"></div>
<div class="a" style="left:297.68px;top:7px;width:61px;height:147px;box-sizing:border-box;border:1px solid #fff;box-shadow:inset 0 0 0 1px #aaa;background:linear-gradient(#a1a29a 0,#a1a29a 74px,#9e9e9e 74px)"></div>
<div class="a" style="left:367.80px;top:7px;width:61px;height:147px;box-sizing:border-box;border:1px solid #fff;box-shadow:inset 0 0 0 1px #aaa;background:linear-gradient(#07090f 0,#07090f 74px,#000000 74px)"></div>
<div class="a" style="left:437.92px;top:7px;width:61px;height:147px;box-sizing:border-box;border:1px solid #fff;box-shadow:inset 0 0 0 1px #aaa;background:linear-gradient(#735842 0,#735842 74px,#745244 74px)"></div>
<div class="a" style="left:508.04px;top:7px;width:61px;height:147px;box-sizing:border-box;border:1px solid #fff;box-shadow:inset 0 0 0 1px #aaa;background:linear-gradient(#c39e7e 0,#c39e7e 74px,#c29584 74px)"></div>
<div class="a" style="left:578.16px;top:7px;width:61px;height:147px;box-sizing:border-box;border:1px solid #fff;box-shadow:inset 0 0 0 1px #aaa;background:linear-gradient(#6a7aa0 0,#6a7aa0 74px,#5f7aa0 74px)"></div>
<div class="t" style="left:31.30px;top:159.45px;font-size:16.72px;transform:scaleX(0.7800);color:#f2f2f2;">White</div>
<div class="t" style="left:94.55px;top:159.45px;font-size:16.72px;transform:scaleX(0.7800);color:#f2f2f2;">Gray 80</div>
<div class="t" style="left:164.70px;top:159.45px;font-size:16.72px;transform:scaleX(0.7800);color:#f2f2f2;">Gray 65</div>
<div class="t" style="left:234.79px;top:159.45px;font-size:16.72px;transform:scaleX(0.7800);color:#f2f2f2;">Gray 50</div>
<div class="t" style="left:304.94px;top:159.45px;font-size:16.72px;transform:scaleX(0.7800);color:#f2f2f2;">Gray 35</div>
<div class="t" style="left:381.84px;top:159.45px;font-size:16.72px;transform:scaleX(0.7800);color:#f2f2f2;">Black</div>
<div class="t" style="left:440.06px;top:159.45px;font-size:16.72px;transform:scaleX(0.7800);color:#f2f2f2;">Dark Skin</div>
<div class="t" style="left:509.82px;top:159.45px;font-size:16.72px;transform:scaleX(0.7800);color:#f2f2f2;">Light Skin</div>
<div class="t" style="left:582.42px;top:159.45px;font-size:16.72px;transform:scaleX(0.7800);color:#f2f2f2;">Blue Sky</div>
</div>
<div class="t" style="left:587.72px;top:643.40px;font-size:15.0px;color:#fff;transform:rotate(-90deg) scaleX(1.0529);transform-origin:0 0">Actual</div>
<div class="t" style="left:588.12px;top:725.91px;font-size:15.0px;color:#fff;transform:rotate(-90deg) scaleX(1.0352);transform-origin:0 0">Target</div>
<div style="position:absolute;left:586.9px;top:782.3px;width:610px;height:19.7px;background:#646464"></div>
<div style="position:absolute;left:605.4px;top:783.8px;width:103px;height:16.5px;background:#444;border-radius:8px"></div>
<svg class="a" style="left:586px;top:782px" width="612" height="21"><rect x="1.5" y="1.5" width="14" height="17" rx="3" fill="#777"/><path d="M5 10 L11 5 V15Z" fill="#444"/><rect x="595.5" y="1.5" width="14" height="17" rx="3" fill="#777"/><path d="M606 10 L600 5 V15Z" fill="#444"/></svg>
<div class="t" style="left:252.60px;top:808.48px;font-size:39.24px;transform:scaleX(0.7730);color:#ececec;-webkit-text-stroke:0.5px #ececec;">Avg dE2000: 4.41</div>
<div class="t" style="left:246.21px;top:859.65px;font-size:38.81px;transform:scaleX(0.8021);color:#ececec;-webkit-text-stroke:0.5px #ececec;">Max dE2000: 8.89</div>
<div class="t" style="left:214.34px;top:918.85px;font-size:38.81px;transform:scaleX(0.8016);color:#ececec;-webkit-text-stroke:0.5px #ececec;">Current Reading</div>
<div class="t" style="left:215.64px;top:970.75px;font-size:30.66px;transform:scaleX(0.8414);color:#ececec;-webkit-text-stroke:0.4px #ececec;">x: 0.4397</div>
<div class="t" style="left:376.77px;top:970.75px;font-size:30.66px;transform:scaleX(0.8423);color:#ececec;-webkit-text-stroke:0.4px #ececec;">y: 0.4013</div>
<div class="t" style="left:215.52px;top:1020.94px;font-size:31.38px;transform:scaleX(0.8153);color:#ececec;-webkit-text-stroke:0.4px #ececec;">fL: 24.03</div>
<div class="t" style="left:214.82px;top:1063.14px;font-size:31.38px;transform:scaleX(0.8633);color:#ececec;-webkit-text-stroke:0.4px #ececec;">cd/m²: 82.34</div>
<div class="a" style="left:532px;top:821px;width:1386px;height:281.5px;overflow:hidden">
<div style="position:absolute;left:0px;top:0px;width:1386px;height:16px;background:#2b2b2b"></div>
<div style="position:absolute;left:0px;top:16px;width:1386px;height:15px;background:#151515"></div>
<div style="position:absolute;left:0px;top:31px;width:1386px;height:29px;background:#404040"></div>
<div style="position:absolute;left:0px;top:60px;width:1386px;height:29px;background:#7f7f7f"></div>
<div style="position:absolute;left:0px;top:89px;width:1386px;height:29px;background:#404040"></div>
<div style="position:absolute;left:0px;top:118px;width:1386px;height:29px;background:#7f7f7f"></div>
<div style="position:absolute;left:0px;top:147px;width:1386px;height:29px;background:#404040"></div>
<div style="position:absolute;left:0px;top:176px;width:1386px;height:29px;background:#7f7f7f"></div>
<div style="position:absolute;left:0px;top:205px;width:1386px;height:29px;background:#404040"></div>
<div style="position:absolute;left:0px;top:234px;width:1386px;height:29px;background:#7f7f7f"></div>
<div style="position:absolute;left:0px;top:0px;width:9px;height:263px;background:#262626"></div>
<div style="position:absolute;left:0px;top:0px;width:9px;height:31px;background:#000"></div>
<div class="t" style="left:91.45px;top:9.19px;font-size:15.84px;transform:scaleX(0.6650);color:#f0f0f0;">White</div>
<div class="t" style="left:132.57px;top:9.19px;font-size:15.84px;transform:scaleX(0.6650);color:#f0f0f0;">Gray 80</div>
<div class="t" style="left:175.07px;top:9.19px;font-size:15.84px;transform:scaleX(0.6650);color:#f0f0f0;">Gray 65</div>
<div class="t" style="left:217.17px;top:9.19px;font-size:15.84px;transform:scaleX(0.6650);color:#f0f0f0;">Gray 50</div>
<div class="t" style="left:259.67px;top:9.19px;font-size:15.84px;transform:scaleX(0.6650);color:#f0f0f0;">Gray 35</div>
<div class="t" style="left:302.36px;top:9.19px;font-size:15.84px;transform:scaleX(0.6650);color:#f0f0f0;">Black</div>
<div class="t" style="left:337.16px;top:9.19px;font-size:15.84px;transform:scaleX(0.6650);color:#f0f0f0;">Dark Skin</div>
<div class="t" style="left:387.56px;top:9.19px;font-size:15.84px;transform:scaleX(0.6650);color:#f0f0f0;">Light Skin</div>
<div class="t" style="left:438.96px;top:9.19px;font-size:15.84px;transform:scaleX(0.6650);color:#f0f0f0;">Blue Sky</div>
<div class="t" style="left:484.66px;top:9.19px;font-size:15.84px;transform:scaleX(0.6650);color:#f0f0f0;">Foliage</div>
<div class="t" style="left:524.76px;top:9.19px;font-size:15.84px;transform:scaleX(0.6650);color:#f0f0f0;">Blue Flower</div>
<div class="t" style="left:586.86px;top:9.19px;font-size:15.84px;transform:scaleX(0.6650);color:#f0f0f0;">Bluish Green</div>
<div class="t" style="left:653.73px;top:9.19px;font-size:15.84px;transform:scaleX(0.6650);color:#f0f0f0;">Orange</div>
<div class="t" style="left:694.06px;top:9.19px;font-size:15.84px;transform:scaleX(0.6650);color:#f0f0f0;">Purplish Blue</div>
<div class="t" style="left:762.56px;top:9.19px;font-size:15.84px;transform:scaleX(0.6650);color:#f0f0f0;">Moderate Red</div>
<div class="t" style="left:836.86px;top:9.19px;font-size:15.84px;transform:scaleX(0.6650);color:#f0f0f0;">Purple</div>
<div class="t" style="left:874.44px;top:9.19px;font-size:15.84px;transform:scaleX(0.6650);color:#f0f0f0;">Yellow Green</div>
<div class="t" style="left:942.93px;top:9.19px;font-size:15.84px;transform:scaleX(0.6650);color:#f0f0f0;">Orange Yellow</div>
<div class="t" style="left:1016.86px;top:9.19px;font-size:15.84px;transform:scaleX(0.6650);color:#f0f0f0;">Blue</div>
<div class="t" style="left:1051.77px;top:9.19px;font-size:15.84px;transform:scaleX(0.6650);color:#f0f0f0;">Green</div>
<div class="t" style="left:1086.76px;top:9.19px;font-size:15.84px;transform:scaleX(0.6650);color:#f0f0f0;">Red</div>
<div class="t" style="left:1122.14px;top:9.19px;font-size:15.84px;transform:scaleX(0.6650);color:#f0f0f0;">Yellow</div>
<div class="t" style="left:1162.56px;top:9.19px;font-size:15.84px;transform:scaleX(0.6650);color:#f0f0f0;">Magenta</div>
<div class="t" style="left:1211.27px;top:9.19px;font-size:15.84px;transform:scaleX(0.6650);color:#f0f0f0;">Cyan</div>
<div class="t" style="left:1245.91px;top:9.19px;font-size:15.84px;transform:scaleX(0.6650);color:#f0f0f0;">100% Red</div>
<div class="t" style="left:1299.51px;top:9.19px;font-size:15.84px;transform:scaleX(0.6650);color:#f0f0f0;">100% Green</div>
<div class="t" style="left:1363.51px;top:9.19px;font-size:15.84px;transform:scaleX(0.6650);color:#f0f0f0;">100%</div>
<div style="position:absolute;left:258.4px;top:118.10000000000002px;width:40.1px;height:27.3px;background:#f2f2f2;border:1px solid #ccc;box-sizing:border-box"></div>
<div class="t" style="left:11.89px;top:37.42px;font-size:18.05px;transform:scaleX(0.6000);color:#f2f2f2;">x: CIE31</div>
<div class="t" style="left:91.04px;top:37.42px;font-size:18.05px;transform:scaleX(0.6320);color:#f4f4f4;">0.32</div>
<div class="t" style="left:132.64px;top:37.42px;font-size:18.05px;transform:scaleX(0.6320);color:#f4f4f4;">0.32</div>
<div class="t" style="left:175.14px;top:37.42px;font-size:18.05px;transform:scaleX(0.6320);color:#f4f4f4;">0.32</div>
<div class="t" style="left:217.24px;top:37.42px;font-size:18.05px;transform:scaleX(0.6320);color:#f4f4f4;">0.32</div>
<div class="t" style="left:259.74px;top:37.42px;font-size:18.05px;transform:scaleX(0.6320);color:#f4f4f4;">0.32</div>
<div class="t" style="left:302.74px;top:37.42px;font-size:18.05px;transform:scaleX(0.6320);color:#f4f4f4;">0.25</div>
<div class="t" style="left:337.54px;top:37.42px;font-size:18.05px;transform:scaleX(0.6320);color:#f4f4f4;">0.39</div>
<div class="t" style="left:387.94px;top:37.42px;font-size:18.05px;transform:scaleX(0.6320);color:#f4f4f4;">0.38</div>
<div class="t" style="left:439.34px;top:37.42px;font-size:18.05px;transform:scaleX(0.6320);color:#f4f4f4;">0.25</div>
<div class="t" style="left:485.04px;top:37.42px;font-size:18.05px;transform:scaleX(0.6320);color:#f4f4f4;">0.34</div>
<div class="t" style="left:525.14px;top:37.42px;font-size:18.05px;transform:scaleX(0.6320);color:#f4f4f4;">0.27</div>
<div class="t" style="left:587.24px;top:37.42px;font-size:18.05px;transform:scaleX(0.6320);color:#f4f4f4;">0.27</div>
<div class="t" style="left:653.74px;top:37.42px;font-size:18.05px;transform:scaleX(0.6320);color:#f4f4f4;">0.50</div>
<div class="t" style="left:694.44px;top:37.42px;font-size:18.05px;transform:scaleX(0.6320);color:#f4f4f4;">0.22</div>
<div class="t" style="left:762.94px;top:37.42px;font-size:18.05px;transform:scaleX(0.6320);color:#f4f4f4;">0.45</div>
<div class="t" style="left:837.24px;top:37.42px;font-size:18.05px;transform:scaleX(0.6320);color:#f4f4f4;">0.28</div>
<div class="t" style="left:874.24px;top:37.42px;font-size:18.05px;transform:scaleX(0.6320);color:#f4f4f4;">0.38</div>
<div class="t" style="left:942.94px;top:37.42px;font-size:18.05px;transform:scaleX(0.6320);color:#f4f4f4;">0.47</div>
<div class="t" style="left:1017.24px;top:37.42px;font-size:18.05px;transform:scaleX(0.6320);color:#f4f4f4;">0.21</div>
<div class="t" style="left:1051.84px;top:37.42px;font-size:18.05px;transform:scaleX(0.6320);color:#f4f4f4;">0.31</div>
<div class="t" style="left:1087.14px;top:37.42px;font-size:18.05px;transform:scaleX(0.6320);color:#f4f4f4;">0.51</div>
<div class="t" style="left:1121.94px;top:37.42px;font-size:18.05px;transform:scaleX(0.6320);color:#f4f4f4;">0.44</div>
<div class="t" style="left:1162.94px;top:37.42px;font-size:18.05px;transform:scaleX(0.6320);color:#f4f4f4;">0.37</div>
<div class="t" style="left:1211.34px;top:37.42px;font-size:18.05px;transform:scaleX(0.6320);color:#f4f4f4;">0.21</div>
<div class="t" style="left:1246.24px;top:37.42px;font-size:18.05px;transform:scaleX(0.6320);color:#f4f4f4;">0.59</div>
<div class="t" style="left:1299.84px;top:37.42px;font-size:18.05px;transform:scaleX(0.6320);color:#f4f4f4;">0.31</div>
<div class="t" style="left:1363.84px;top:37.42px;font-size:18.05px;transform:scaleX(0.6320);color:#f4f4f4;">0.16</div>
<div class="t" style="left:11.95px;top:66.42px;font-size:18.05px;transform:scaleX(0.6000);color:#f2f2f2;">y: CIE31</div>
<div class="t" style="left:91.04px;top:66.42px;font-size:18.05px;transform:scaleX(0.6320);color:#f4f4f4;">0.33</div>
<div class="t" style="left:132.64px;top:66.42px;font-size:18.05px;transform:scaleX(0.6320);color:#f4f4f4;">0.34</div>
<div class="t" style="left:175.14px;top:66.42px;font-size:18.05px;transform:scaleX(0.6320);color:#f4f4f4;">0.34</div>
<div class="t" style="left:217.24px;top:66.42px;font-size:18.05px;transform:scaleX(0.6320);color:#f4f4f4;">0.34</div>
<div class="t" style="left:259.74px;top:66.42px;font-size:18.05px;transform:scaleX(0.6320);color:#f4f4f4;">0.34</div>
<div class="t" style="left:302.74px;top:66.42px;font-size:18.05px;transform:scaleX(0.6320);color:#f4f4f4;">0.24</div>
<div class="t" style="left:337.54px;top:66.42px;font-size:18.05px;transform:scaleX(0.6320);color:#f4f4f4;">0.37</div>
<div class="t" style="left:387.94px;top:66.42px;font-size:18.05px;transform:scaleX(0.6320);color:#f4f4f4;">0.37</div>
<div class="t" style="left:439.34px;top:66.42px;font-size:18.05px;transform:scaleX(0.6320);color:#f4f4f4;">0.26</div>
<div class="t" style="left:485.04px;top:66.42px;font-size:18.05px;transform:scaleX(0.6320);color:#f4f4f4;">0.43</div>
<div class="t" style="left:525.14px;top:66.42px;font-size:18.05px;transform:scaleX(0.6320);color:#f4f4f4;">0.25</div>
<div class="t" style="left:587.24px;top:66.42px;font-size:18.05px;transform:scaleX(0.6320);color:#f4f4f4;">0.36</div>
<div class="t" style="left:653.74px;top:66.42px;font-size:18.05px;transform:scaleX(0.6320);color:#f4f4f4;">0.43</div>
<div class="t" style="left:694.44px;top:66.42px;font-size:18.05px;transform:scaleX(0.6320);color:#f4f4f4;">0.19</div>
<div class="t" style="left:762.94px;top:66.42px;font-size:18.05px;transform:scaleX(0.6320);color:#f4f4f4;">0.33</div>
<div class="t" style="left:837.24px;top:66.42px;font-size:18.05px;transform:scaleX(0.6320);color:#f4f4f4;">0.22</div>
<div class="t" style="left:874.24px;top:66.42px;font-size:18.05px;transform:scaleX(0.6320);color:#f4f4f4;">0.51</div>
<div class="t" style="left:942.94px;top:66.42px;font-size:18.05px;transform:scaleX(0.6320);color:#f4f4f4;">0.46</div>
<div class="t" style="left:1017.24px;top:66.42px;font-size:18.05px;transform:scaleX(0.6320);color:#f4f4f4;">0.15</div>
<div class="t" style="left:1051.84px;top:66.42px;font-size:18.05px;transform:scaleX(0.6320);color:#f4f4f4;">0.50</div>
<div class="t" style="left:1087.14px;top:66.42px;font-size:18.05px;transform:scaleX(0.6320);color:#f4f4f4;">0.34</div>
<div class="t" style="left:1121.94px;top:66.42px;font-size:18.05px;transform:scaleX(0.6320);color:#f4f4f4;">0.49</div>
<div class="t" style="left:1162.94px;top:66.42px;font-size:18.05px;transform:scaleX(0.6320);color:#f4f4f4;">0.26</div>
<div class="t" style="left:1211.34px;top:66.42px;font-size:18.05px;transform:scaleX(0.6320);color:#f4f4f4;">0.26</div>
<div class="t" style="left:1246.24px;top:66.42px;font-size:18.05px;transform:scaleX(0.6320);color:#f4f4f4;">0.37</div>
<div class="t" style="left:1299.84px;top:66.42px;font-size:18.05px;transform:scaleX(0.6320);color:#f4f4f4;">0.63</div>
<div class="t" style="left:1363.84px;top:66.42px;font-size:18.05px;transform:scaleX(0.6320);color:#f4f4f4;">0.06</div>
<div class="t" style="left:11.73px;top:95.42px;font-size:18.05px;transform:scaleX(0.6000);color:#f2f2f2;">Y</div>
<div class="t" style="left:90.93px;top:95.42px;font-size:18.05px;transform:scaleX(0.6320);color:#f4f4f4;">219.59</div>
<div class="t" style="left:132.24px;top:95.42px;font-size:18.05px;transform:scaleX(0.6320);color:#f4f4f4;">177.07</div>
<div class="t" style="left:174.74px;top:95.42px;font-size:18.05px;transform:scaleX(0.6320);color:#f4f4f4;">143.74</div>
<div class="t" style="left:216.84px;top:95.42px;font-size:18.05px;transform:scaleX(0.6320);color:#f4f4f4;">111.06</div>
<div class="t" style="left:259.63px;top:95.42px;font-size:18.05px;transform:scaleX(0.6320);color:#f4f4f4;">77.58</div>
<div class="t" style="left:302.74px;top:95.42px;font-size:18.05px;transform:scaleX(0.6320);color:#f4f4f4;">0.33</div>
<div class="t" style="left:337.43px;top:95.42px;font-size:18.05px;transform:scaleX(0.6320);color:#f4f4f4;">24.00</div>
<div class="t" style="left:387.89px;top:95.42px;font-size:18.05px;transform:scaleX(0.6320);color:#f4f4f4;">81.74</div>
<div class="t" style="left:439.57px;top:95.42px;font-size:18.05px;transform:scaleX(0.6320);color:#f4f4f4;">40.96</div>
<div class="t" style="left:484.93px;top:95.42px;font-size:18.05px;transform:scaleX(0.6320);color:#f4f4f4;">29.14</div>
<div class="t" style="left:525.14px;top:95.42px;font-size:18.05px;transform:scaleX(0.6320);color:#f4f4f4;">52.29</div>
<div class="t" style="left:587.19px;top:95.42px;font-size:18.05px;transform:scaleX(0.6320);color:#f4f4f4;">89.79</div>
<div class="t" style="left:653.63px;top:95.42px;font-size:18.05px;transform:scaleX(0.6320);color:#f4f4f4;">69.85</div>
<div class="t" style="left:694.33px;top:95.42px;font-size:18.05px;transform:scaleX(0.6320);color:#f4f4f4;">25.61</div>
<div class="t" style="left:763.17px;top:95.42px;font-size:18.05px;transform:scaleX(0.6320);color:#f4f4f4;">47.26</div>
<div class="t" style="left:836.84px;top:95.42px;font-size:18.05px;transform:scaleX(0.6320);color:#f4f4f4;">14.12</div>
<div class="t" style="left:874.19px;top:95.42px;font-size:18.05px;transform:scaleX(0.6320);color:#f4f4f4;">95.29</div>
<div class="t" style="left:942.54px;top:95.42px;font-size:18.05px;transform:scaleX(0.6320);color:#f4f4f4;">101.10</div>
<div class="t" style="left:1016.84px;top:95.42px;font-size:18.05px;transform:scaleX(0.6320);color:#f4f4f4;">14.78</div>
<div class="t" style="left:1052.07px;top:95.42px;font-size:18.05px;transform:scaleX(0.6320);color:#f4f4f4;">49.33</div>
<div class="t" style="left:1087.14px;top:95.42px;font-size:18.05px;transform:scaleX(0.6320);color:#f4f4f4;">30.86</div>
<div class="t" style="left:1121.54px;top:95.42px;font-size:18.05px;transform:scaleX(0.6320);color:#f4f4f4;">136.22</div>
<div class="t" style="left:1163.17px;top:95.42px;font-size:18.05px;transform:scaleX(0.6320);color:#f4f4f4;">46.68</div>
<div class="t" style="left:1211.57px;top:95.42px;font-size:18.05px;transform:scaleX(0.6320);color:#f4f4f4;">40.31</div>
<div class="t" style="left:1246.24px;top:95.42px;font-size:18.05px;transform:scaleX(0.6320);color:#f4f4f4;">58.14</div>
<div class="t" style="left:1299.44px;top:95.42px;font-size:18.05px;transform:scaleX(0.6320);color:#f4f4f4;">145.43</div>
<div class="t" style="left:1363.44px;top:95.42px;font-size:18.05px;transform:scaleX(0.6320);color:#f4f4f4;">15.06</div>
<div class="t" style="left:11.78px;top:124.42px;font-size:18.05px;transform:scaleX(0.6000);color:#f2f2f2;">Target x:CIE31</div>
<div class="t" style="left:91.04px;top:124.42px;font-size:18.05px;transform:scaleX(0.6320);color:#f4f4f4;">0.31</div>
<div class="t" style="left:132.64px;top:124.42px;font-size:18.05px;transform:scaleX(0.6320);color:#f4f4f4;">0.31</div>
<div class="t" style="left:175.14px;top:124.42px;font-size:18.05px;transform:scaleX(0.6320);color:#f4f4f4;">0.31</div>
<div class="t" style="left:217.24px;top:124.42px;font-size:18.05px;transform:scaleX(0.6320);color:#f4f4f4;">0.31</div>
<div class="t" style="left:259.74px;top:124.42px;font-size:18.05px;transform:scaleX(0.6320);color:#222;">0.31</div>
<div class="t" style="left:302.74px;top:124.42px;font-size:18.05px;transform:scaleX(0.6320);color:#f4f4f4;">0.31</div>
<div class="t" style="left:337.54px;top:124.42px;font-size:18.05px;transform:scaleX(0.6320);color:#f4f4f4;">0.40</div>
<div class="t" style="left:387.94px;top:124.42px;font-size:18.05px;transform:scaleX(0.6320);color:#f4f4f4;">0.38</div>
<div class="t" style="left:439.34px;top:124.42px;font-size:18.05px;transform:scaleX(0.6320);color:#f4f4f4;">0.25</div>
<div class="t" style="left:485.04px;top:124.42px;font-size:18.05px;transform:scaleX(0.6320);color:#f4f4f4;">0.34</div>
<div class="t" style="left:525.14px;top:124.42px;font-size:18.05px;transform:scaleX(0.6320);color:#f4f4f4;">0.27</div>
<div class="t" style="left:587.24px;top:124.42px;font-size:18.05px;transform:scaleX(0.6320);color:#f4f4f4;">0.26</div>
<div class="t" style="left:653.74px;top:124.42px;font-size:18.05px;transform:scaleX(0.6320);color:#f4f4f4;">0.51</div>
<div class="t" style="left:694.44px;top:124.42px;font-size:18.05px;transform:scaleX(0.6320);color:#f4f4f4;">0.22</div>
<div class="t" style="left:762.94px;top:124.42px;font-size:18.05px;transform:scaleX(0.6320);color:#f4f4f4;">0.46</div>
<div class="t" style="left:837.24px;top:124.42px;font-size:18.05px;transform:scaleX(0.6320);color:#f4f4f4;">0.29</div>
<div class="t" style="left:874.24px;top:124.42px;font-size:18.05px;transform:scaleX(0.6320);color:#f4f4f4;">0.38</div>
<div class="t" style="left:942.94px;top:124.42px;font-size:18.05px;transform:scaleX(0.6320);color:#f4f4f4;">0.47</div>
<div class="t" style="left:1017.24px;top:124.42px;font-size:18.05px;transform:scaleX(0.6320);color:#f4f4f4;">0.19</div>
<div class="t" style="left:1051.84px;top:124.42px;font-size:18.05px;transform:scaleX(0.6320);color:#f4f4f4;">0.31</div>
<div class="t" style="left:1087.14px;top:124.42px;font-size:18.05px;transform:scaleX(0.6320);color:#f4f4f4;">0.54</div>
<div class="t" style="left:1121.94px;top:124.42px;font-size:18.05px;transform:scaleX(0.6320);color:#f4f4f4;">0.45</div>
<div class="t" style="left:1162.94px;top:124.42px;font-size:18.05px;transform:scaleX(0.6320);color:#f4f4f4;">0.37</div>
<div class="t" style="left:1211.34px;top:124.42px;font-size:18.05px;transform:scaleX(0.6320);color:#f4f4f4;">0.21</div>
<div class="t" style="left:1246.24px;top:124.42px;font-size:18.05px;transform:scaleX(0.6320);color:#f4f4f4;">0.64</div>
<div class="t" style="left:1299.84px;top:124.42px;font-size:18.05px;transform:scaleX(0.6320);color:#f4f4f4;">0.30</div>
<div class="t" style="left:1363.84px;top:124.42px;font-size:18.05px;transform:scaleX(0.6320);color:#f4f4f4;">0.15</div>
<div class="t" style="left:11.78px;top:153.42px;font-size:18.05px;transform:scaleX(0.6000);color:#f2f2f2;">Target y:CIE31</div>
<div class="t" style="left:91.04px;top:153.42px;font-size:18.05px;transform:scaleX(0.6320);color:#f4f4f4;">0.33</div>
<div class="t" style="left:132.64px;top:153.42px;font-size:18.05px;transform:scaleX(0.6320);color:#f4f4f4;">0.33</div>
<div class="t" style="left:175.14px;top:153.42px;font-size:18.05px;transform:scaleX(0.6320);color:#f4f4f4;">0.33</div>
<div class="t" style="left:217.24px;top:153.42px;font-size:18.05px;transform:scaleX(0.6320);color:#f4f4f4;">0.33</div>
<div class="t" style="left:259.74px;top:153.42px;font-size:18.05px;transform:scaleX(0.6320);color:#f4f4f4;">0.33</div>
<div class="t" style="left:302.74px;top:153.42px;font-size:18.05px;transform:scaleX(0.6320);color:#f4f4f4;">0.33</div>
<div class="t" style="left:337.54px;top:153.42px;font-size:18.05px;transform:scaleX(0.6320);color:#f4f4f4;">0.36</div>
<div class="t" style="left:387.94px;top:153.42px;font-size:18.05px;transform:scaleX(0.6320);color:#f4f4f4;">0.36</div>
<div class="t" style="left:439.34px;top:153.42px;font-size:18.05px;transform:scaleX(0.6320);color:#f4f4f4;">0.27</div>
<div class="t" style="left:485.04px;top:153.42px;font-size:18.05px;transform:scaleX(0.6320);color:#f4f4f4;">0.43</div>
<div class="t" style="left:525.14px;top:153.42px;font-size:18.05px;transform:scaleX(0.6320);color:#f4f4f4;">0.25</div>
<div class="t" style="left:587.24px;top:153.42px;font-size:18.05px;transform:scaleX(0.6320);color:#f4f4f4;">0.36</div>
<div class="t" style="left:653.74px;top:153.42px;font-size:18.05px;transform:scaleX(0.6320);color:#f4f4f4;">0.41</div>
<div class="t" style="left:694.44px;top:153.42px;font-size:18.05px;transform:scaleX(0.6320);color:#f4f4f4;">0.19</div>
<div class="t" style="left:762.94px;top:153.42px;font-size:18.05px;transform:scaleX(0.6320);color:#f4f4f4;">0.31</div>
<div class="t" style="left:837.24px;top:153.42px;font-size:18.05px;transform:scaleX(0.6320);color:#f4f4f4;">0.22</div>
<div class="t" style="left:874.24px;top:153.42px;font-size:18.05px;transform:scaleX(0.6320);color:#f4f4f4;">0.49</div>
<div class="t" style="left:942.94px;top:153.42px;font-size:18.05px;transform:scaleX(0.6320);color:#f4f4f4;">0.44</div>
<div class="t" style="left:1017.24px;top:153.42px;font-size:18.05px;transform:scaleX(0.6320);color:#f4f4f4;">0.14</div>
<div class="t" style="left:1051.84px;top:153.42px;font-size:18.05px;transform:scaleX(0.6320);color:#f4f4f4;">0.49</div>
<div class="t" style="left:1087.14px;top:153.42px;font-size:18.05px;transform:scaleX(0.6320);color:#f4f4f4;">0.32</div>
<div class="t" style="left:1121.94px;top:153.42px;font-size:18.05px;transform:scaleX(0.6320);color:#f4f4f4;">0.47</div>
<div class="t" style="left:1162.94px;top:153.42px;font-size:18.05px;transform:scaleX(0.6320);color:#f4f4f4;">0.25</div>
<div class="t" style="left:1211.34px;top:153.42px;font-size:18.05px;transform:scaleX(0.6320);color:#f4f4f4;">0.27</div>
<div class="t" style="left:1246.24px;top:153.42px;font-size:18.05px;transform:scaleX(0.6320);color:#f4f4f4;">0.33</div>
<div class="t" style="left:1299.84px;top:153.42px;font-size:18.05px;transform:scaleX(0.6320);color:#f4f4f4;">0.60</div>
<div class="t" style="left:1363.84px;top:153.42px;font-size:18.05px;transform:scaleX(0.6320);color:#f4f4f4;">0.06</div>
<div class="t" style="left:11.78px;top:182.42px;font-size:18.05px;transform:scaleX(0.6000);color:#f2f2f2;">Target Y</div>
<div class="t" style="left:90.93px;top:182.42px;font-size:18.05px;transform:scaleX(0.6320);color:#f4f4f4;">219.59</div>
<div class="t" style="left:132.24px;top:182.42px;font-size:18.05px;transform:scaleX(0.6320);color:#f4f4f4;">173.76</div>
<div class="t" style="left:174.74px;top:182.42px;font-size:18.05px;transform:scaleX(0.6320);color:#f4f4f4;">140.01</div>
<div class="t" style="left:216.84px;top:182.42px;font-size:18.05px;transform:scaleX(0.6320);color:#f4f4f4;">107.82</div>
<div class="t" style="left:259.63px;top:182.42px;font-size:18.05px;transform:scaleX(0.6320);color:#f4f4f4;">75.08</div>
<div class="t" style="left:302.74px;top:182.42px;font-size:18.05px;transform:scaleX(0.6320);color:#f4f4f4;">0.00</div>
<div class="t" style="left:337.43px;top:182.42px;font-size:18.05px;transform:scaleX(0.6320);color:#f4f4f4;">22.12</div>
<div class="t" style="left:387.83px;top:182.42px;font-size:18.05px;transform:scaleX(0.6320);color:#f4f4f4;">76.63</div>
<div class="t" style="left:439.57px;top:182.42px;font-size:18.05px;transform:scaleX(0.6320);color:#f4f4f4;">41.06</div>
<div class="t" style="left:484.93px;top:182.42px;font-size:18.05px;transform:scaleX(0.6320);color:#f4f4f4;">28.62</div>
<div class="t" style="left:525.14px;top:182.42px;font-size:18.05px;transform:scaleX(0.6320);color:#f4f4f4;">51.21</div>
<div class="t" style="left:587.19px;top:182.42px;font-size:18.05px;transform:scaleX(0.6320);color:#f4f4f4;">91.95</div>
<div class="t" style="left:653.63px;top:182.42px;font-size:18.05px;transform:scaleX(0.6320);color:#f4f4f4;">62.25</div>
<div class="t" style="left:694.33px;top:182.42px;font-size:18.05px;transform:scaleX(0.6320);color:#f4f4f4;">25.81</div>
<div class="t" style="left:763.17px;top:182.42px;font-size:18.05px;transform:scaleX(0.6320);color:#f4f4f4;">41.01</div>
<div class="t" style="left:836.84px;top:182.42px;font-size:18.05px;transform:scaleX(0.6320);color:#f4f4f4;">14.66</div>
<div class="t" style="left:874.19px;top:182.42px;font-size:18.05px;transform:scaleX(0.6320);color:#f4f4f4;">93.89</div>
<div class="t" style="left:942.89px;top:182.42px;font-size:18.05px;transform:scaleX(0.6320);color:#f4f4f4;">93.35</div>
<div class="t" style="left:1016.84px;top:182.42px;font-size:18.05px;transform:scaleX(0.6320);color:#f4f4f4;">13.71</div>
<div class="t" style="left:1051.84px;top:182.42px;font-size:18.05px;transform:scaleX(0.6320);color:#f4f4f4;">50.45</div>
<div class="t" style="left:1087.03px;top:182.42px;font-size:18.05px;transform:scaleX(0.6320);color:#f4f4f4;">25.61</div>
<div class="t" style="left:1121.54px;top:182.42px;font-size:18.05px;transform:scaleX(0.6320);color:#f4f4f4;">129.48</div>
<div class="t" style="left:1163.17px;top:182.42px;font-size:18.05px;transform:scaleX(0.6320);color:#f4f4f4;">41.34</div>
<div class="t" style="left:1211.57px;top:182.42px;font-size:18.05px;transform:scaleX(0.6320);color:#f4f4f4;">42.64</div>
<div class="t" style="left:1246.47px;top:182.42px;font-size:18.05px;transform:scaleX(0.6320);color:#f4f4f4;">46.70</div>
<div class="t" style="left:1299.44px;top:182.42px;font-size:18.05px;transform:scaleX(0.6320);color:#f4f4f4;">157.04</div>
<div class="t" style="left:1363.44px;top:182.42px;font-size:18.05px;transform:scaleX(0.6320);color:#f4f4f4;">15.83</div>
<div class="t" style="left:11.68px;top:211.42px;font-size:18.05px;transform:scaleX(0.6000);color:#f2f2f2;">ΔE 2000</div>
<div class="t" style="left:91.04px;top:211.42px;font-size:18.05px;transform:scaleX(0.6320);color:#f4f4f4;">3.31</div>
<div class="t" style="left:132.64px;top:211.42px;font-size:18.05px;transform:scaleX(0.6320);color:#f4f4f4;">3.13</div>
<div class="t" style="left:175.03px;top:211.42px;font-size:18.05px;transform:scaleX(0.6320);color:#f4f4f4;">2.99</div>
<div class="t" style="left:217.13px;top:211.42px;font-size:18.05px;transform:scaleX(0.6320);color:#f4f4f4;">2.82</div>
<div class="t" style="left:259.63px;top:211.42px;font-size:18.05px;transform:scaleX(0.6320);color:#f4f4f4;">2.52</div>
<div class="t" style="left:302.63px;top:211.42px;font-size:18.05px;transform:scaleX(0.6320);color:#f4f4f4;">2.28</div>
<div class="t" style="left:337.77px;top:211.42px;font-size:18.05px;transform:scaleX(0.6320);color:#f4f4f4;">4.10</div>
<div class="t" style="left:387.94px;top:211.42px;font-size:18.05px;transform:scaleX(0.6320);color:#f4f4f4;">5.33</div>
<div class="t" style="left:439.23px;top:211.42px;font-size:18.05px;transform:scaleX(0.6320);color:#f4f4f4;">2.47</div>
<div class="t" style="left:485.04px;top:211.42px;font-size:18.05px;transform:scaleX(0.6320);color:#f4f4f4;">0.82</div>
<div class="t" style="left:524.74px;top:211.42px;font-size:18.05px;transform:scaleX(0.6320);color:#f4f4f4;">1.51</div>
<div class="t" style="left:586.84px;top:211.42px;font-size:18.05px;transform:scaleX(0.6320);color:#f4f4f4;">1.17</div>
<div class="t" style="left:653.63px;top:211.42px;font-size:18.05px;transform:scaleX(0.6320);color:#f4f4f4;">7.34</div>
<div class="t" style="left:694.33px;top:211.42px;font-size:18.05px;transform:scaleX(0.6320);color:#f4f4f4;">2.72</div>
<div class="t" style="left:762.94px;top:211.42px;font-size:18.05px;transform:scaleX(0.6320);color:#f4f4f4;">5.74</div>
<div class="t" style="left:837.13px;top:211.42px;font-size:18.05px;transform:scaleX(0.6320);color:#f4f4f4;">2.19</div>
<div class="t" style="left:873.84px;top:211.42px;font-size:18.05px;transform:scaleX(0.6320);color:#f4f4f4;">1.61</div>
<div class="t" style="left:942.83px;top:211.42px;font-size:18.05px;transform:scaleX(0.6320);color:#f4f4f4;">6.17</div>
<div class="t" style="left:1017.13px;top:211.42px;font-size:18.05px;transform:scaleX(0.6320);color:#f4f4f4;">2.09</div>
<div class="t" style="left:1051.84px;top:211.42px;font-size:18.05px;transform:scaleX(0.6320);color:#f4f4f4;">0.83</div>
<div class="t" style="left:1087.03px;top:211.42px;font-size:18.05px;transform:scaleX(0.6320);color:#f4f4f4;">6.13</div>
<div class="t" style="left:1122.17px;top:211.42px;font-size:18.05px;transform:scaleX(0.6320);color:#f4f4f4;">4.22</div>
<div class="t" style="left:1162.94px;top:211.42px;font-size:18.05px;transform:scaleX(0.6320);color:#f4f4f4;">3.72</div>
<div class="t" style="left:1211.34px;top:211.42px;font-size:18.05px;transform:scaleX(0.6320);color:#f4f4f4;">3.67</div>
<div class="t" style="left:1246.19px;top:211.42px;font-size:18.05px;transform:scaleX(0.6320);color:#f4f4f4;">8.89</div>
<div class="t" style="left:1299.84px;top:211.42px;font-size:18.05px;transform:scaleX(0.6320);color:#f4f4f4;">3.53</div>
<div class="t" style="left:1363.84px;top:211.42px;font-size:18.05px;transform:scaleX(0.6320);color:#f4f4f4;">3.66</div>
<div class="t" style="left:11.57px;top:240.42px;font-size:18.05px;transform:scaleX(0.6000);color:#f2f2f2;">dEITP</div>
<div class="t" style="left:91.04px;top:240.42px;font-size:18.05px;transform:scaleX(0.6320);color:#f4f4f4;">3.86</div>
<div class="t" style="left:132.64px;top:240.42px;font-size:18.05px;transform:scaleX(0.6320);color:#f4f4f4;">3.71</div>
<div class="t" style="left:175.14px;top:240.42px;font-size:18.05px;transform:scaleX(0.6320);color:#f4f4f4;">3.75</div>
<div class="t" style="left:217.24px;top:240.42px;font-size:18.05px;transform:scaleX(0.6320);color:#f4f4f4;">3.54</div>
<div class="t" style="left:259.74px;top:240.42px;font-size:18.05px;transform:scaleX(0.6320);color:#f4f4f4;">3.49</div>
<div class="t" style="left:302.63px;top:240.42px;font-size:18.05px;transform:scaleX(0.6320);color:#f4f4f4;">74.98</div>
<div class="t" style="left:337.49px;top:240.42px;font-size:18.05px;transform:scaleX(0.6320);color:#f4f4f4;">8.57</div>
<div class="t" style="left:387.83px;top:240.42px;font-size:18.05px;transform:scaleX(0.6320);color:#f4f4f4;">7.67</div>
<div class="t" style="left:439.57px;top:240.42px;font-size:18.05px;transform:scaleX(0.6320);color:#f4f4f4;">4.15</div>
<div class="t" style="left:484.93px;top:240.42px;font-size:18.05px;transform:scaleX(0.6320);color:#f4f4f4;">2.20</div>
<div class="t" style="left:525.14px;top:240.42px;font-size:18.05px;transform:scaleX(0.6320);color:#f4f4f4;">3.74</div>
<div class="t" style="left:587.24px;top:240.42px;font-size:18.05px;transform:scaleX(0.6320);color:#f4f4f4;">3.29</div>
<div class="t" style="left:653.34px;top:240.42px;font-size:18.05px;transform:scaleX(0.6320);color:#f4f4f4;">19.14</div>
<div class="t" style="left:694.33px;top:240.42px;font-size:18.05px;transform:scaleX(0.6320);color:#f4f4f4;">7.78</div>
<div class="t" style="left:762.83px;top:240.42px;font-size:18.05px;transform:scaleX(0.6320);color:#f4f4f4;">20.93</div>
<div class="t" style="left:837.19px;top:240.42px;font-size:18.05px;transform:scaleX(0.6320);color:#f4f4f4;">9.56</div>
<div class="t" style="left:874.13px;top:240.42px;font-size:18.05px;transform:scaleX(0.6320);color:#f4f4f4;">7.34</div>
<div class="t" style="left:942.54px;top:240.42px;font-size:18.05px;transform:scaleX(0.6320);color:#f4f4f4;">14.41</div>
<div class="t" style="left:1016.84px;top:240.42px;font-size:18.05px;transform:scaleX(0.6320);color:#f4f4f4;">12.79</div>
<div class="t" style="left:1051.84px;top:240.42px;font-size:18.05px;transform:scaleX(0.6320);color:#f4f4f4;">3.37</div>
<div class="t" style="left:1087.14px;top:240.42px;font-size:18.05px;transform:scaleX(0.6320);color:#f4f4f4;">31.43</div>
<div class="t" style="left:1121.54px;top:240.42px;font-size:18.05px;transform:scaleX(0.6320);color:#f4f4f4;">13.29</div>
<div class="t" style="left:1162.54px;top:240.42px;font-size:18.05px;transform:scaleX(0.6320);color:#f4f4f4;">14.30</div>
<div class="t" style="left:1211.23px;top:240.42px;font-size:18.05px;transform:scaleX(0.6320);color:#f4f4f4;">6.97</div>
<div class="t" style="left:1246.24px;top:240.42px;font-size:18.05px;transform:scaleX(0.6320);color:#f4f4f4;">52.65</div>
<div class="t" style="left:1299.44px;top:240.42px;font-size:18.05px;transform:scaleX(0.6320);color:#f4f4f4;">17.41</div>
<div class="t" style="left:1363.84px;top:240.42px;font-size:18.05px;transform:scaleX(0.6320);color:#f4f4f4;">30.45</div>
<div style="position:absolute;left:9px;top:263px;width:1377px;height:18.5px;background:#5a5a5a"></div>
<div style="position:absolute;left:21.5px;top:264.5px;width:837px;height:15.5px;background:#3c3c3c;border-radius:8px"></div>
<svg class="a" style="left:9px;top:263px" width="1377" height="19"><rect x="1" y="1.5" width="11" height="15.5" rx="3" fill="#7a7a7a"/><path d="M3.5 9.2 L9 5 V13.5Z" fill="#444"/><rect x="1365" y="1.5" width="11" height="15.5" rx="3" fill="#7a7a7a"/><path d="M1373.5 9.2 L1368 5 V13.5Z" fill="#444"/></svg>
</div>
<div style="position:absolute;left:1203px;top:106px;width:717px;height:695px;background:#1b1b1b"></div>
<div style="position:absolute;left:1211px;top:114px;width:701px;height:679px;background:#333"></div>
<div class="t" style="left:1516.95px;top:121.41px;font-size:18.90px;transform:scaleX(0.7913);color:#d8d8d8;">CIE 1976 u&#x27;v&#x27;</div>
<div style="position:absolute;left:1248.7px;top:143.0px;width:658.3px;height:614.5px;background:#232323"></div>
<div class="a" style="left:1248.7px;top:143.0px;width:658.3px;height:614.5px;overflow:hidden">
<svg class="a" style="left:0;top:0" width="658.3" height="614.5" viewBox="1248.7 143.0 658.3 614.5"><defs><clipPath id="locc"><path d="M1531.0 741.4 L1524.0 737.0 L1514.0 726.0 L1487.7 700.0 L1469.9 682.0 L1453.2 664.0 L1437.7 646.0 L1423.2 628.0 L1409.7 610.0 L1397.1 592.0 L1385.3 574.0 L1374.4 556.0 L1364.1 538.0 L1354.6 520.0 L1345.6 502.0 L1337.1 484.0 L1329.2 466.0 L1321.6 448.0 L1314.3 430.0 L1307.4 412.0 L1300.6 394.0 L1294.1 376.0 L1287.5 358.0 L1279.6 336.8 L1277.6 330.1 L1274.7 320.8 L1271.3 309.8 L1267.7 298.2 L1264.4 287.0 L1261.8 277.3 L1259.6 268.9 L1257.8 261.0 L1256.2 253.4 L1254.8 246.3 L1253.5 239.6 L1252.5 233.1 L1251.7 227.1 L1251.0 221.5 L1250.6 216.3 L1250.3 211.4 L1250.2 206.8 L1250.3 202.4 L1250.5 198.2 L1250.8 194.3 L1251.4 190.7 L1252.0 187.4 L1252.9 184.2 L1253.8 181.3 L1254.9 178.5 L1256.1 176.0 L1257.5 173.7 L1258.9 171.5 L1260.5 169.6 L1262.2 167.8 L1263.9 166.3 L1265.8 164.9 L1267.8 163.7 L1269.8 162.7 L1271.9 161.8 L1274.1 161.0 L1276.3 160.3 L1278.6 159.8 L1280.9 159.3 L1283.3 159.0 L1285.8 158.7 L1288.2 158.5 L1290.7 158.2 L1293.3 158.1 L1295.8 158.0 L1298.4 157.9 L1301.0 157.9 L1303.6 157.8 L1306.2 157.8 L1308.8 157.8 L1311.4 157.9 L1314.0 157.9 L1316.7 158.0 L1319.3 158.1 L1322.0 158.2 L1324.7 158.3 L1327.4 158.5 L1330.1 158.6 L1332.9 158.8 L1335.7 159.0 L1338.5 159.2 L1341.4 159.4 L1344.3 159.7 L1347.2 160.0 L1350.2 160.2 L1353.3 160.5 L1356.3 160.8 L1359.5 161.2 L1362.6 161.5 L1365.8 161.9 L1369.1 162.2 L1372.4 162.6 L1375.8 163.0 L1379.2 163.4 L1382.7 163.9 L1386.2 164.3 L1389.8 164.7 L1393.4 165.2 L1397.2 165.7 L1400.9 166.2 L1404.8 166.7 L1408.7 167.2 L1412.7 167.7 L1416.7 168.2 L1420.9 168.8 L1425.1 169.3 L1429.3 169.9 L1433.6 170.5 L1438.0 171.1 L1442.5 171.7 L1447.1 172.3 L1451.7 173.0 L1456.4 173.6 L1461.2 174.3 L1466.1 174.9 L1471.1 175.6 L1476.1 176.3 L1481.2 177.0 L1486.4 177.7 L1491.7 178.5 L1497.0 179.2 L1502.4 180.0 L1507.9 180.7 L1513.5 181.5 L1519.2 182.3 L1524.9 183.1 L1530.8 183.9 L1536.6 184.7 L1542.6 185.6 L1548.7 186.4 L1554.8 187.3 L1561.0 188.1 L1567.2 189.0 L1573.5 189.9 L1579.9 190.8 L1586.4 191.6 L1592.9 192.5 L1599.4 193.5 L1606.0 194.4 L1612.6 195.3 L1619.2 196.2 L1625.9 197.1 L1632.6 198.1 L1639.4 199.0 L1646.1 200.0 L1652.7 200.9 L1658.8 201.8 L1664.5 202.5 L1670.1 203.3 L1676.2 204.2 L1683.2 205.1 L1691.6 206.3 L1701.8 207.7 L1713.7 209.4 L1726.5 211.1 L1739.6 212.9 L1752.2 214.7 L1763.7 216.3 L1774.1 217.7 L1784.1 219.1 L1793.7 220.5 L1802.8 221.8 L1811.5 223.0 L1819.7 224.1 L1827.4 225.2 L1834.6 226.2 L1841.3 227.1 L1847.6 228.0 L1853.7 228.8 L1859.5 229.6 L1865.1 230.4 L1870.4 231.2 L1875.4 231.9 L1880.1 232.5 L1884.5 233.1 L1888.6 233.7 L1892.5 234.3 L1896.1 234.7 L1899.3 235.2 L1902.4 235.6 L1905.2 236.0 L1907.8 236.4 L1910.2 236.7 L1912.2 237.0 L1914.1 237.2 L1915.8 237.5 L1917.5 237.7 L1919.2 237.9 L1921.0 238.2 L1922.8 238.5 L1924.6 238.7 L1926.3 238.9 L1927.8 239.2 L1929.1 239.3 L1930.1 239.5 L1931.0 239.6 L1931.6 239.7 L1932.2 239.8 L1932.6 239.8 L1932.9 239.9 Z"/></clipPath><linearGradient id="ogr" gradientUnits="userSpaceOnUse" x1="1385.9" y1="182.6" x2="1743.4" y2="223.1"><stop offset="0.0" stop-color="#009900"/><stop offset="0.0625" stop-color="#1c9900"/><stop offset="0.125" stop-color="#409900"/><stop offset="0.1875" stop-color="#6d9900"/><stop offset="0.25" stop-color="#999500"/><stop offset="0.3125" stop-color="#997700"/><stop offset="0.375" stop-color="#995c00"/><stop offset="0.4375" stop-color="#994600"/><stop offset="0.5" stop-color="#993600"/><stop offset="0.5625" stop-color="#992800"/><stop offset="0.625" stop-color="#991e00"/><stop offset="0.6875" stop-color="#991600"/><stop offset="0.75" stop-color="#991000"/><stop offset="0.8125" stop-color="#990a00"/><stop offset="0.875" stop-color="#990600"/><stop offset="0.9375" stop-color="#990300"/><stop offset="1.0" stop-color="#990000"/></linearGradient><linearGradient id="orb" gradientUnits="userSpaceOnUse" x1="1743.4" y1="223.1" x2="1441.3" y2="596.1"><stop offset="0.0" stop-color="#990000"/><stop offset="0.0625" stop-color="#99000a"/><stop offset="0.125" stop-color="#990016"/><stop offset="0.1875" stop-color="#990025"/><stop offset="0.25" stop-color="#990036"/><stop offset="0.3125" stop-color="#990049"/><stop offset="0.375" stop-color="#99005f"/><stop offset="0.4375" stop-color="#990076"/><stop offset="0.5" stop-color="#99008e"/><stop offset="0.5625" stop-color="#880099"/><stop offset="0.625" stop-color="#6b0099"/><stop offset="0.6875" stop-color="#510099"/><stop offset="0.75" stop-color="#3b0099"/><stop offset="0.8125" stop-color="#280099"/><stop offset="0.875" stop-color="#190099"/><stop offset="0.9375" stop-color="#0b0099"/><stop offset="1.0" stop-color="#000099"/></linearGradient><linearGradient id="obg" gradientUnits="userSpaceOnUse" x1="1441.3" y1="596.1" x2="1385.9" y2="182.6"><stop offset="0.0" stop-color="#000099"/><stop offset="0.0625" stop-color="#000299"/><stop offset="0.125" stop-color="#000499"/><stop offset="0.1875" stop-color="#000799"/><stop offset="0.25" stop-color="#000c99"/><stop offset="0.3125" stop-color="#001099"/><stop offset="0.375" stop-color="#001699"/><stop offset="0.4375" stop-color="#001f99"/><stop offset="0.5" stop-color="#002b99"/><stop offset="0.5625" stop-color="#003b99"/><stop offset="0.625" stop-color="#005499"/><stop offset="0.6875" stop-color="#007799"/><stop offset="0.75" stop-color="#00998c"/><stop offset="0.8125" stop-color="#009957"/><stop offset="0.875" stop-color="#00992e"/><stop offset="0.9375" stop-color="#009913"/><stop offset="1.0" stop-color="#009900"/></linearGradient></defs><g clip-path="url(#locc)"><path d="M1385.9 182.6 L906.5 -395.2 L3409.0 -111.7 L1743.4 223.1 Z" fill="url(#ogr)" stroke="url(#ogr)" stroke-width="1"/><path d="M1743.4 223.1 L3409.0 -111.7 L1294.3 2499.3 L1441.3 596.1 Z" fill="url(#orb)" stroke="url(#orb)" stroke-width="1"/><path d="M1441.3 596.1 L1294.3 2499.3 L906.5 -395.2 L1385.9 182.6 Z" fill="url(#obg)" stroke="url(#obg)" stroke-width="1"/></g></svg>
<div class="a" style="left:0;top:0;width:720px;height:614.5px;background:conic-gradient(from 0deg at 217.1px 135.9px,#e6ff00 0deg,#ffff00 4.4deg,#ff0000 78.6deg,#ff00ff 140.2deg,#0000ff 184.4deg,#00ffff 258.7deg,#00ff00 320.3deg,#e6ff00 360deg);clip-path:polygon(494.7px 80.1px,137.2px 39.6px,192.6px 453.1px)"></div>
<svg class="a" style="left:0;top:0" width="658.3" height="614.5" viewBox="1248.7 143.0 658.3 614.5"><defs><linearGradient id="wrg" gradientUnits="userSpaceOnUse" x1="1465.8" y1="278.9" x2="1475.6" y2="192.8"><stop offset="0" stop-color="#fff" stop-opacity=".85"/><stop offset=".15" stop-color="#fff" stop-opacity=".6"/><stop offset=".4" stop-color="#fff" stop-opacity=".28"/><stop offset=".7" stop-color="#fff" stop-opacity=".08"/><stop offset="1" stop-color="#fff" stop-opacity="0"/></linearGradient><linearGradient id="wgb" gradientUnits="userSpaceOnUse" x1="1465.8" y1="278.9" x2="1400.0" y2="287.7"><stop offset="0" stop-color="#fff" stop-opacity=".85"/><stop offset=".15" stop-color="#fff" stop-opacity=".6"/><stop offset=".4" stop-color="#fff" stop-opacity=".28"/><stop offset=".7" stop-color="#fff" stop-opacity=".08"/><stop offset="1" stop-color="#fff" stop-opacity="0"/></linearGradient><linearGradient id="wbr" gradientUnits="userSpaceOnUse" x1="1465.8" y1="278.9" x2="1606.1" y2="392.6"><stop offset="0" stop-color="#fff" stop-opacity=".85"/><stop offset=".15" stop-color="#fff" stop-opacity=".6"/><stop offset=".4" stop-color="#fff" stop-opacity=".28"/><stop offset=".7" stop-color="#fff" stop-opacity=".08"/><stop offset="1" stop-color="#fff" stop-opacity="0"/></linearGradient></defs><path d="M1465.8 278.9 L1743.4 223.1 L1385.9 182.6 Z" fill="url(#wrg)" shape-rendering="crispEdges"/><path d="M1465.8 278.9 L1385.9 182.6 L1441.3 596.1 Z" fill="url(#wgb)" shape-rendering="crispEdges"/><path d="M1465.8 278.9 L1441.3 596.1 L1743.4 223.1 Z" fill="url(#wbr)" shape-rendering="crispEdges"/><defs><radialGradient id="wglow" gradientUnits="userSpaceOnUse" cx="1465.8" cy="278.9" r="60"><stop offset="0" stop-color="#fff" stop-opacity=".55"/><stop offset=".5" stop-color="#fff" stop-opacity=".2"/><stop offset="1" stop-color="#fff" stop-opacity="0"/></radialGradient><clipPath id="tric"><path d="M1743.4 223.1 L1385.9 182.6 L1441.3 596.1 Z"/></clipPath></defs><circle cx="1465.8" cy="278.9" r="60" fill="url(#wglow)" clip-path="url(#tric)"/></svg>
</div>
<svg class="a" style="left:1200px;top:100px" width="720" height="700" viewBox="1200 100 720 700"><path d="M1248.7 757.5 V143.8 H1908 V757.5" fill="none" stroke="#9a9a9a" stroke-width="1.8"/><path d="M1248.7 143 V757.5 H1908" fill="none" stroke="#bdbdbd" stroke-width="1.8"/><line x1="1241.5" y1="757.5" x2="1248.7" y2="757.5" stroke="#ddd" stroke-width="1.3"/><line x1="1241.5" y1="706.4" x2="1248.7" y2="706.4" stroke="#ddd" stroke-width="1.3"/><line x1="1241.5" y1="655.3" x2="1248.7" y2="655.3" stroke="#ddd" stroke-width="1.3"/><line x1="1241.5" y1="604.2" x2="1248.7" y2="604.2" stroke="#ddd" stroke-width="1.3"/><line x1="1241.5" y1="553.1" x2="1248.7" y2="553.1" stroke="#ddd" stroke-width="1.3"/><line x1="1241.5" y1="502.0" x2="1248.7" y2="502.0" stroke="#ddd" stroke-width="1.3"/><line x1="1241.5" y1="450.9" x2="1248.7" y2="450.9" stroke="#ddd" stroke-width="1.3"/><line x1="1241.5" y1="399.8" x2="1248.7" y2="399.8" stroke="#ddd" stroke-width="1.3"/><line x1="1241.5" y1="348.7" x2="1248.7" y2="348.7" stroke="#ddd" stroke-width="1.3"/><line x1="1241.5" y1="297.6" x2="1248.7" y2="297.6" stroke="#ddd" stroke-width="1.3"/><line x1="1241.5" y1="246.5" x2="1248.7" y2="246.5" stroke="#ddd" stroke-width="1.3"/><line x1="1241.5" y1="195.4" x2="1248.7" y2="195.4" stroke="#ddd" stroke-width="1.3"/><line x1="1248.7" y1="757.5" x2="1248.7" y2="765" stroke="#ddd" stroke-width="1.3"/><line x1="1303.6" y1="757.5" x2="1303.6" y2="765" stroke="#ddd" stroke-width="1.3"/><line x1="1358.5" y1="757.5" x2="1358.5" y2="765" stroke="#ddd" stroke-width="1.3"/><line x1="1413.3" y1="757.5" x2="1413.3" y2="765" stroke="#ddd" stroke-width="1.3"/><line x1="1468.2" y1="757.5" x2="1468.2" y2="765" stroke="#ddd" stroke-width="1.3"/><line x1="1523.1" y1="757.5" x2="1523.1" y2="765" stroke="#ddd" stroke-width="1.3"/><line x1="1578.0" y1="757.5" x2="1578.0" y2="765" stroke="#ddd" stroke-width="1.3"/><line x1="1632.9" y1="757.5" x2="1632.9" y2="765" stroke="#ddd" stroke-width="1.3"/><line x1="1687.7" y1="757.5" x2="1687.7" y2="765" stroke="#ddd" stroke-width="1.3"/><line x1="1742.6" y1="757.5" x2="1742.6" y2="765" stroke="#ddd" stroke-width="1.3"/><line x1="1797.5" y1="757.5" x2="1797.5" y2="765" stroke="#ddd" stroke-width="1.3"/><line x1="1852.4" y1="757.5" x2="1852.4" y2="765" stroke="#ddd" stroke-width="1.3"/></svg>
<div class="t" style="left:1233.79px;top:749.12px;font-size:18.05px;transform:scaleX(0.8000);color:#d8d8d8;">0</div>
<div class="t" style="left:1213.79px;top:698.02px;font-size:18.05px;transform:scaleX(0.8000);color:#d8d8d8;">0.05</div>
<div class="t" style="left:1221.88px;top:646.92px;font-size:18.05px;transform:scaleX(0.8000);color:#d8d8d8;">0.1</div>
<div class="t" style="left:1213.79px;top:595.82px;font-size:18.05px;transform:scaleX(0.8000);color:#d8d8d8;">0.15</div>
<div class="t" style="left:1221.95px;top:544.72px;font-size:18.05px;transform:scaleX(0.8000);color:#d8d8d8;">0.2</div>
<div class="t" style="left:1213.79px;top:493.62px;font-size:18.05px;transform:scaleX(0.8000);color:#d8d8d8;">0.25</div>
<div class="t" style="left:1221.80px;top:442.52px;font-size:18.05px;transform:scaleX(0.8000);color:#d8d8d8;">0.3</div>
<div class="t" style="left:1213.79px;top:391.42px;font-size:18.05px;transform:scaleX(0.8000);color:#d8d8d8;">0.35</div>
<div class="t" style="left:1221.59px;top:340.32px;font-size:18.05px;transform:scaleX(0.8000);color:#d8d8d8;">0.4</div>
<div class="t" style="left:1213.79px;top:289.22px;font-size:18.05px;transform:scaleX(0.8000);color:#d8d8d8;">0.45</div>
<div class="t" style="left:1221.80px;top:238.12px;font-size:18.05px;transform:scaleX(0.8000);color:#d8d8d8;">0.5</div>
<div class="t" style="left:1213.79px;top:187.02px;font-size:18.05px;transform:scaleX(0.8000);color:#d8d8d8;">0.55</div>
<div class="t" style="left:1244.75px;top:769.38px;font-size:17.62px;transform:scaleX(0.8000);color:#d8d8d8;">0</div>
<div class="t" style="left:1289.87px;top:769.38px;font-size:17.62px;transform:scaleX(0.8000);color:#d8d8d8;">0.05</div>
<div class="t" style="left:1348.70px;top:769.38px;font-size:17.62px;transform:scaleX(0.8000);color:#d8d8d8;">0.1</div>
<div class="t" style="left:1399.63px;top:769.38px;font-size:17.62px;transform:scaleX(0.8000);color:#d8d8d8;">0.15</div>
<div class="t" style="left:1458.49px;top:769.38px;font-size:17.62px;transform:scaleX(0.8000);color:#d8d8d8;">0.2</div>
<div class="t" style="left:1509.39px;top:769.38px;font-size:17.62px;transform:scaleX(0.8000);color:#d8d8d8;">0.25</div>
<div class="t" style="left:1568.18px;top:769.38px;font-size:17.62px;transform:scaleX(0.8000);color:#d8d8d8;">0.3</div>
<div class="t" style="left:1619.15px;top:769.38px;font-size:17.62px;transform:scaleX(0.8000);color:#d8d8d8;">0.35</div>
<div class="t" style="left:1677.84px;top:769.38px;font-size:17.62px;transform:scaleX(0.8000);color:#d8d8d8;">0.4</div>
<div class="t" style="left:1728.91px;top:769.38px;font-size:17.62px;transform:scaleX(0.8000);color:#d8d8d8;">0.45</div>
<div class="t" style="left:1787.70px;top:769.38px;font-size:17.62px;transform:scaleX(0.8000);color:#d8d8d8;">0.5</div>
<div class="t" style="left:1838.67px;top:769.38px;font-size:17.62px;transform:scaleX(0.8000);color:#d8d8d8;">0.55</div>
<svg class="a" style="left:1248px;top:143px" width="660" height="615" viewBox="1248 143 660 615"><rect x="1379.05" y="172.80" width="12.5" height="16.4" fill="none" stroke="#fff" stroke-width="1.8"/><rect x="1404.75" y="203.30" width="12.5" height="16.4" fill="none" stroke="#fff" stroke-width="1.8"/><rect x="1445.25" y="193.10" width="12.5" height="16.4" fill="none" stroke="#fff" stroke-width="1.8"/><rect x="1466.15" y="182.70" width="12.5" height="16.4" fill="none" stroke="#fff" stroke-width="1.8"/><rect x="1494.05" y="188.30" width="12.5" height="16.4" fill="none" stroke="#fff" stroke-width="1.8"/><rect x="1526.65" y="195.50" width="12.5" height="16.4" fill="none" stroke="#fff" stroke-width="1.8"/><rect x="1442.55" y="220.10" width="12.5" height="16.4" fill="none" stroke="#fff" stroke-width="1.8"/><rect x="1571.65" y="199.80" width="12.5" height="16.4" fill="none" stroke="#fff" stroke-width="1.8"/><rect x="1571.65" y="205.80" width="12.5" height="16.4" fill="none" stroke="#fff" stroke-width="1.8"/><rect x="1552.50" y="218.05" width="12.5" height="16.4" fill="none" stroke="#fff" stroke-width="1.8"/><rect x="1545.00" y="220.10" width="12.5" height="16.4" fill="none" stroke="#fff" stroke-width="1.8"/><rect x="1545.00" y="228.50" width="12.5" height="16.4" fill="none" stroke="#fff" stroke-width="1.8"/><rect x="1541.65" y="224.30" width="12.5" height="16.4" fill="none" stroke="#fff" stroke-width="1.8"/><rect x="1533.75" y="225.10" width="12.5" height="16.4" fill="none" stroke="#fff" stroke-width="1.8"/><rect x="1527.05" y="231.00" width="12.5" height="16.4" fill="none" stroke="#fff" stroke-width="1.8"/><rect x="1520.45" y="233.50" width="12.5" height="16.4" fill="none" stroke="#fff" stroke-width="1.8"/><rect x="1512.95" y="235.10" width="12.5" height="16.4" fill="none" stroke="#fff" stroke-width="1.8"/><rect x="1510.00" y="240.10" width="12.5" height="16.4" fill="none" stroke="#fff" stroke-width="1.8"/><rect x="1498.35" y="247.60" width="12.5" height="16.4" fill="none" stroke="#fff" stroke-width="1.8"/><rect x="1411.65" y="259.00" width="12.5" height="16.4" fill="none" stroke="#fff" stroke-width="1.8"/><rect x="1394.65" y="282.40" width="12.5" height="16.4" fill="none" stroke="#fff" stroke-width="1.8"/><rect x="1591.25" y="252.60" width="12.5" height="16.4" fill="none" stroke="#fff" stroke-width="1.8"/><rect x="1400.65" y="322.40" width="12.5" height="16.4" fill="none" stroke="#fff" stroke-width="1.8"/><rect x="1435.65" y="319.00" width="12.5" height="16.4" fill="none" stroke="#fff" stroke-width="1.8"/><rect x="1456.75" y="325.40" width="12.5" height="16.4" fill="none" stroke="#fff" stroke-width="1.8"/><rect x="1493.15" y="347.70" width="12.5" height="16.4" fill="none" stroke="#fff" stroke-width="1.8"/><rect x="1438.05" y="385.30" width="12.5" height="16.4" fill="none" stroke="#fff" stroke-width="1.8"/><rect x="1557.65" y="312.10" width="12.5" height="16.4" fill="none" stroke="#fff" stroke-width="1.8"/><rect x="1577.15" y="410.20" width="12.5" height="16.4" fill="none" stroke="#fff" stroke-width="1.8"/><rect x="1437.75" y="447.10" width="12.5" height="16.4" fill="none" stroke="#fff" stroke-width="1.8"/><rect x="1435.55" y="586.80" width="12.5" height="16.4" fill="none" stroke="#fff" stroke-width="1.8"/><rect x="1736.15" y="212.90" width="12.5" height="16.4" fill="none" stroke="#fff" stroke-width="1.8"/><rect x="1653.95" y="238.80" width="12.5" height="16.4" fill="none" stroke="#fff" stroke-width="1.8"/><rect x="1459" y="269.5" width="13" height="16" fill="#e8ecf8" stroke="#000" stroke-width="2.4"/><ellipse cx="1387.1" cy="173.8" rx="4.3" ry="5.3" fill="#00ff00" stroke="#111" stroke-width="1.2"/><ellipse cx="1470" cy="183.6" rx="4.3" ry="5.3" fill="#ffff00" stroke="#111" stroke-width="1.2"/><ellipse cx="1448.8" cy="195.9" rx="4.3" ry="5.3" fill="#a0b050" stroke="#111" stroke-width="1.2"/><ellipse cx="1410.1" cy="207.9" rx="4.3" ry="5.3" fill="#508850" stroke="#111" stroke-width="1.2"/><ellipse cx="1447.5" cy="227.1" rx="4.3" ry="5.3" fill="#5a6a40" stroke="#111" stroke-width="1.2"/><ellipse cx="1420.9" cy="267.8" rx="4.3" ry="5.3" fill="#60b0a0" stroke="#111" stroke-width="1.2"/><ellipse cx="1467" cy="272.6" rx="4.3" ry="5.3" fill="#999999" stroke="#111" stroke-width="1.2"/><ellipse cx="1406.9" cy="293" rx="4.3" ry="5.3" fill="#00ffff" stroke="#111" stroke-width="1.2"/><ellipse cx="1492.1" cy="192.1" rx="4.3" ry="5.3" fill="#e0c030" stroke="#111" stroke-width="1.2"/><ellipse cx="1518.9" cy="197.9" rx="4.3" ry="5.3" fill="#e0a030" stroke="#111" stroke-width="1.2"/><ellipse cx="1553.75" cy="203.75" rx="4.3" ry="5.3" fill="#a06030" stroke="#111" stroke-width="1.2"/><ellipse cx="1553" cy="207.5" rx="4.3" ry="5.3" fill="#a05a2a" stroke="#111" stroke-width="1.2"/><ellipse cx="1524.2" cy="216.7" rx="4.3" ry="5.3" fill="#8a5a38" stroke="#111" stroke-width="1.2"/><ellipse cx="1532.1" cy="215.8" rx="4.3" ry="5.3" fill="#7a4a28" stroke="#111" stroke-width="1.2"/><ellipse cx="1539.6" cy="221.25" rx="4.3" ry="5.3" fill="#6a4028" stroke="#111" stroke-width="1.2"/><ellipse cx="1515" cy="221.25" rx="4.3" ry="5.3" fill="#c89060" stroke="#111" stroke-width="1.2"/><ellipse cx="1527.1" cy="222.9" rx="4.3" ry="5.3" fill="#d08a5a" stroke="#111" stroke-width="1.2"/><ellipse cx="1534.6" cy="228.3" rx="4.3" ry="5.3" fill="#f09878" stroke="#111" stroke-width="1.2"/><ellipse cx="1522.9" cy="232.1" rx="4.3" ry="5.3" fill="#d09070" stroke="#111" stroke-width="1.2"/><ellipse cx="1508.75" cy="232.1" rx="4.3" ry="5.3" fill="#c89070" stroke="#111" stroke-width="1.2"/><ellipse cx="1515" cy="229.2" rx="4.3" ry="5.3" fill="#d09878" stroke="#111" stroke-width="1.2"/><ellipse cx="1515" cy="235" rx="4.3" ry="5.3" fill="#d09070" stroke="#111" stroke-width="1.2"/><ellipse cx="1498.75" cy="234.6" rx="4.3" ry="5.3" fill="#f0c0a0" stroke="#111" stroke-width="1.2"/><ellipse cx="1506.25" cy="242.1" rx="4.3" ry="5.3" fill="#704838" stroke="#111" stroke-width="1.2"/><ellipse cx="1497.9" cy="248" rx="4.3" ry="5.3" fill="#c09070" stroke="#111" stroke-width="1.2"/><ellipse cx="1497.9" cy="245.8" rx="4.3" ry="5.3" fill="#f8c8a8" stroke="#111" stroke-width="1.2"/><ellipse cx="1570.8" cy="253.75" rx="4.3" ry="5.3" fill="#c05068" stroke="#111" stroke-width="1.2"/><ellipse cx="1616" cy="238.75" rx="4.3" ry="5.3" fill="#b03040" stroke="#111" stroke-width="1.2"/><ellipse cx="1665.5" cy="212.6" rx="4.3" ry="5.3" fill="#ff0000" stroke="#111" stroke-width="1.2"/><ellipse cx="1413.9" cy="335.4" rx="4.3" ry="5.3" fill="#108898" stroke="#111" stroke-width="1.2"/><ellipse cx="1445.9" cy="326.8" rx="4.3" ry="5.3" fill="#6880a0" stroke="#111" stroke-width="1.2"/><ellipse cx="1466.8" cy="329.9" rx="4.3" ry="5.3" fill="#8880b0" stroke="#111" stroke-width="1.2"/><ellipse cx="1454.5" cy="341.8" rx="4.3" ry="5.3" fill="#000000" stroke="#111" stroke-width="1.2"/><ellipse cx="1488" cy="362.7" rx="4.3" ry="5.3" fill="#604070" stroke="#111" stroke-width="1.2"/><ellipse cx="1453.2" cy="396.9" rx="4.3" ry="5.3" fill="#5060a0" stroke="#111" stroke-width="1.2"/><ellipse cx="1550.9" cy="308" rx="4.3" ry="5.3" fill="#c05090" stroke="#111" stroke-width="1.2"/><ellipse cx="1455" cy="441.5" rx="4.3" ry="5.3" fill="#3040a0" stroke="#111" stroke-width="1.2"/><ellipse cx="1569.4" cy="396.9" rx="3.8" ry="4.4" fill="#ff00ff" stroke="#111" stroke-width="1.2"/><ellipse cx="1461.3" cy="599.9" rx="3.8" ry="4.4" fill="#2020ff" stroke="#111" stroke-width="1.2"/></svg>
<div style="position:absolute;left:1694.5px;top:539px;width:210px;height:168px;background:#2a2a2a"></div>
<svg class="a" style="left:1694px;top:539px" width="212" height="170" viewBox="1694 539 212 170"><defs><linearGradient id="ins" x1="0" y1="0" x2="1" y2="1"><stop offset="0" stop-color="#ff8a26"/><stop offset="1" stop-color="#ff4428"/></linearGradient><clipPath id="insc"><rect x="1697.8" y="542.2" width="203.6" height="161.2"/></clipPath></defs><rect x="1697.8" y="542.2" width="203.6" height="161.2" fill="url(#ins)" stroke="#9a9a9a" stroke-width="2"/><g clip-path="url(#insc)"><rect x="1833.05" y="566.20" width="12.5" height="16.4" fill="none" stroke="#fff" stroke-width="1.8"/><rect x="1883.65" y="566.90" width="12.5" height="16.4" fill="none" stroke="#fff" stroke-width="1.8"/><rect x="1725.05" y="591.30" width="12.5" height="16.4" fill="none" stroke="#fff" stroke-width="1.8"/><rect x="1792.55" y="614.90" width="12.5" height="16.4" fill="none" stroke="#fff" stroke-width="1.8"/><rect x="1882.55" y="613.00" width="12.5" height="16.4" fill="none" stroke="#fff" stroke-width="1.8"/><rect x="1702.95" y="631.80" width="12.5" height="16.4" fill="none" stroke="#fff" stroke-width="1.8"/><rect x="1710.05" y="642.30" width="12.5" height="16.4" fill="none" stroke="#fff" stroke-width="1.8"/><rect x="1717.95" y="657.30" width="12.5" height="16.4" fill="none" stroke="#fff" stroke-width="1.8"/><rect x="1811.65" y="631.80" width="12.5" height="16.4" fill="none" stroke="#fff" stroke-width="1.8"/><rect x="1796.65" y="662.50" width="12.5" height="16.4" fill="none" stroke="#fff" stroke-width="1.8"/><ellipse cx="1707.3" cy="548.1" rx="4.3" ry="5.3" fill="#d08860" stroke="#111" stroke-width="1.2"/><ellipse cx="1768" cy="565" rx="4.3" ry="5.3" fill="#e08a60" stroke="#111" stroke-width="1.2"/><ellipse cx="1781.9" cy="581.9" rx="4.3" ry="5.3" fill="#d08050" stroke="#111" stroke-width="1.2"/><ellipse cx="1825.4" cy="571.7" rx="4.3" ry="5.3" fill="#6a4028" stroke="#111" stroke-width="1.2"/><ellipse cx="1701.3" cy="612.6" rx="4.3" ry="5.3" fill="#c88060" stroke="#111" stroke-width="1.2"/><ellipse cx="1773.7" cy="608.1" rx="4.3" ry="5.3" fill="#f09070" stroke="#111" stroke-width="1.2"/><ellipse cx="1698" cy="583" rx="4.3" ry="5.3" fill="#c08060" stroke="#111" stroke-width="1.2"/><ellipse cx="1698" cy="598" rx="4.3" ry="5.3" fill="#c08060" stroke="#111" stroke-width="1.2"/></g></svg>
<div style="position:absolute;left:1645.4px;top:717.6px;width:260.6px;height:32.9px;background:#2a2a2a"></div>
<div class="t" style="left:1644.36px;top:721.28px;font-size:26.60px;transform:scaleX(0.7701);color:#f0f0f0;">RGB Triplet: 217, 140, 94</div>
<div style="position:absolute;left:199px;top:1102.5px;width:1721px;height:67.5px;background:#333"></div>
<div style="position:absolute;left:199px;top:1106px;width:1400px;height:64px;background:#3a3a3a"></div>
<div class="a" style="left:199px;top:1100px;width:1398px;height:70px;overflow:hidden">
<div class="a" style="left:2.1px;top:7.8px;width:50px;height:49px;border-radius:4px 4px 0 0;background:linear-gradient(#a9a9a9,#7c7c7c 55%,#6c6c6c)"></div>
<div class="a" style="left:7.3px;top:13.3px;width:40px;height:23.4px;border-radius:3px;background:#ffffff;box-shadow:inset 1px 1px 1px rgba(0,0,0,.25)"></div>
<div class="t" style="left:14.59px;top:42.06px;font-size:11.63px;transform:scaleX(0.8000);color:#1e1e1e;font-weight:bold;">White</div>
<div class="a" style="left:54.1px;top:7.8px;width:50px;height:49px;border-radius:4px 4px 0 0;background:linear-gradient(#a9a9a9,#7c7c7c 55%,#6c6c6c)"></div>
<div class="a" style="left:59.3px;top:13.3px;width:40px;height:23.4px;border-radius:3px;background:#e6e6e6;box-shadow:inset 1px 1px 1px rgba(0,0,0,.25)"></div>
<div class="t" style="left:62.03px;top:42.06px;font-size:11.63px;transform:scaleX(0.8000);color:#1e1e1e;font-weight:bold;">Gray 80</div>
<div class="a" style="left:106.1px;top:7.8px;width:50px;height:49px;border-radius:4px 4px 0 0;background:linear-gradient(#a9a9a9,#7c7c7c 55%,#6c6c6c)"></div>
<div class="a" style="left:111.3px;top:13.3px;width:40px;height:23.4px;border-radius:3px;background:#d2d2d2;box-shadow:inset 1px 1px 1px rgba(0,0,0,.25)"></div>
<div class="t" style="left:113.96px;top:42.06px;font-size:11.63px;transform:scaleX(0.8000);color:#1e1e1e;font-weight:bold;">Gray 65</div>
<div class="a" style="left:158.1px;top:7.8px;width:50px;height:49px;border-radius:4px 4px 0 0;background:linear-gradient(#a9a9a9,#7c7c7c 55%,#6c6c6c)"></div>
<div class="a" style="left:163.3px;top:13.3px;width:40px;height:23.4px;border-radius:3px;background:#bababa;box-shadow:inset 1px 1px 1px rgba(0,0,0,.25)"></div>
<div class="t" style="left:166.03px;top:42.06px;font-size:11.63px;transform:scaleX(0.8000);color:#1e1e1e;font-weight:bold;">Gray 50</div>
<div class="a" style="left:210.1px;top:7.8px;width:50px;height:49px;border-radius:4px 4px 0 0;background:linear-gradient(#a9a9a9,#7c7c7c 55%,#6c6c6c)"></div>
<div class="a" style="left:215.3px;top:13.3px;width:40px;height:23.4px;border-radius:3px;background:#a0a0a0;box-shadow:inset 1px 1px 1px rgba(0,0,0,.25)"></div>
<div class="t" style="left:217.96px;top:42.06px;font-size:11.63px;transform:scaleX(0.8000);color:#1e1e1e;font-weight:bold;">Gray 35</div>
<div class="a" style="left:262.1px;top:7.8px;width:50px;height:49px;border-radius:4px 4px 0 0;background:linear-gradient(#a9a9a9,#7c7c7c 55%,#6c6c6c)"></div>
<div class="a" style="left:267.3px;top:13.3px;width:40px;height:23.4px;border-radius:3px;background:#000000;box-shadow:inset 1px 1px 1px rgba(0,0,0,.25)"></div>
<div class="t" style="left:274.40px;top:42.06px;font-size:11.63px;transform:scaleX(0.8000);color:#1e1e1e;font-weight:bold;">Black</div>
<div class="a" style="left:314.1px;top:7.8px;width:50px;height:49px;border-radius:4px 4px 0 0;background:linear-gradient(#a9a9a9,#7c7c7c 55%,#6c6c6c)"></div>
<div class="a" style="left:319.3px;top:13.3px;width:40px;height:23.4px;border-radius:3px;background:#735244;box-shadow:inset 1px 1px 1px rgba(0,0,0,.25)"></div>
<div class="t" style="left:319.22px;top:42.06px;font-size:11.63px;transform:scaleX(0.7400);color:#1e1e1e;font-weight:bold;">Dark Skin</div>
<div class="a" style="left:366.1px;top:7.8px;width:50px;height:49px;border-radius:4px 4px 0 0;background:linear-gradient(#a9a9a9,#7c7c7c 55%,#6c6c6c)"></div>
<div class="a" style="left:371.3px;top:13.3px;width:40px;height:23.4px;border-radius:3px;background:#c29682;box-shadow:inset 1px 1px 1px rgba(0,0,0,.25)"></div>
<div class="t" style="left:370.30px;top:42.06px;font-size:11.63px;transform:scaleX(0.7400);color:#1e1e1e;font-weight:bold;">Light Skin</div>
<div class="a" style="left:418.1px;top:7.8px;width:50px;height:49px;border-radius:4px 4px 0 0;background:linear-gradient(#a9a9a9,#7c7c7c 55%,#6c6c6c)"></div>
<div class="a" style="left:423.3px;top:13.3px;width:40px;height:23.4px;border-radius:3px;background:#5f7a9e;box-shadow:inset 1px 1px 1px rgba(0,0,0,.25)"></div>
<div class="t" style="left:423.17px;top:42.06px;font-size:11.63px;transform:scaleX(0.8000);color:#1e1e1e;font-weight:bold;">Blue Sky</div>
<div class="a" style="left:470.1px;top:7.8px;width:50px;height:49px;border-radius:4px 4px 0 0;background:linear-gradient(#a9a9a9,#7c7c7c 55%,#6c6c6c)"></div>
<div class="a" style="left:475.3px;top:13.3px;width:40px;height:23.4px;border-radius:3px;background:#5a6b42;box-shadow:inset 1px 1px 1px rgba(0,0,0,.25)"></div>
<div class="t" style="left:478.66px;top:42.06px;font-size:11.63px;transform:scaleX(0.8000);color:#1e1e1e;font-weight:bold;">Foliage</div>
<div class="a" style="left:522.1px;top:7.8px;width:50px;height:49px;border-radius:4px 4px 0 0;background:linear-gradient(#a9a9a9,#7c7c7c 55%,#6c6c6c)"></div>
<div class="a" style="left:527.3px;top:13.3px;width:40px;height:12.1px;border-radius:3px;background:#8580b2;box-shadow:inset 1px 1px 1px rgba(0,0,0,.25)"></div>
<div class="t" style="left:532.25px;top:30.26px;font-size:11.63px;transform:scaleX(0.7800);color:#1e1e1e;font-weight:bold;">Blue</div>
<div class="t" style="left:532.25px;top:42.16px;font-size:11.63px;transform:scaleX(0.7800);color:#1e1e1e;font-weight:bold;">Flower</div>
<div class="a" style="left:574.1px;top:7.8px;width:50px;height:49px;border-radius:4px 4px 0 0;background:linear-gradient(#a9a9a9,#7c7c7c 55%,#6c6c6c)"></div>
<div class="a" style="left:579.3px;top:13.3px;width:40px;height:12.1px;border-radius:3px;background:#63bda8;box-shadow:inset 1px 1px 1px rgba(0,0,0,.25)"></div>
<div class="t" style="left:585.22px;top:30.26px;font-size:11.63px;transform:scaleX(0.7800);color:#1e1e1e;font-weight:bold;">Bluish</div>
<div class="t" style="left:585.45px;top:42.16px;font-size:11.63px;transform:scaleX(0.7800);color:#1e1e1e;font-weight:bold;">Green</div>
<div class="a" style="left:626.1px;top:7.8px;width:50px;height:49px;border-radius:4px 4px 0 0;background:linear-gradient(#a9a9a9,#7c7c7c 55%,#6c6c6c)"></div>
<div class="a" style="left:631.3px;top:13.3px;width:40px;height:23.4px;border-radius:3px;background:#d97a2a;box-shadow:inset 1px 1px 1px rgba(0,0,0,.25)"></div>
<div class="t" style="left:634.77px;top:42.06px;font-size:11.63px;transform:scaleX(0.8000);color:#1e1e1e;font-weight:bold;">Orange</div>
<div class="a" style="left:678.1px;top:7.8px;width:50px;height:49px;border-radius:4px 4px 0 0;background:linear-gradient(#a9a9a9,#7c7c7c 55%,#6c6c6c)"></div>
<div class="a" style="left:683.3px;top:13.3px;width:40px;height:12.1px;border-radius:3px;background:#4a5aa6;box-shadow:inset 1px 1px 1px rgba(0,0,0,.25)"></div>
<div class="t" style="left:684.94px;top:30.26px;font-size:11.63px;transform:scaleX(0.7800);color:#1e1e1e;font-weight:bold;">Purplish</div>
<div class="t" style="left:684.94px;top:42.16px;font-size:11.63px;transform:scaleX(0.7800);color:#1e1e1e;font-weight:bold;">Blue</div>
<div class="a" style="left:730.1px;top:7.8px;width:50px;height:49px;border-radius:4px 4px 0 0;background:linear-gradient(#a9a9a9,#7c7c7c 55%,#6c6c6c)"></div>
<div class="a" style="left:735.3px;top:13.3px;width:40px;height:12.1px;border-radius:3px;background:#c25361;box-shadow:inset 1px 1px 1px rgba(0,0,0,.25)"></div>
<div class="t" style="left:734.78px;top:30.26px;font-size:11.63px;transform:scaleX(0.7800);color:#1e1e1e;font-weight:bold;">Moderate</div>
<div class="t" style="left:734.78px;top:42.16px;font-size:11.63px;transform:scaleX(0.7800);color:#1e1e1e;font-weight:bold;">Red</div>
<div class="a" style="left:782.1px;top:7.8px;width:50px;height:49px;border-radius:4px 4px 0 0;background:linear-gradient(#a9a9a9,#7c7c7c 55%,#6c6c6c)"></div>
<div class="a" style="left:787.3px;top:13.3px;width:40px;height:23.4px;border-radius:3px;background:#5e3c6c;box-shadow:inset 1px 1px 1px rgba(0,0,0,.25)"></div>
<div class="t" style="left:792.47px;top:42.06px;font-size:11.63px;transform:scaleX(0.8000);color:#1e1e1e;font-weight:bold;">Purple</div>
<div class="a" style="left:834.1px;top:7.8px;width:50px;height:49px;border-radius:4px 4px 0 0;background:linear-gradient(#a9a9a9,#7c7c7c 55%,#6c6c6c)"></div>
<div class="a" style="left:839.3px;top:13.3px;width:40px;height:12.1px;border-radius:3px;background:#9dbc40;box-shadow:inset 1px 1px 1px rgba(0,0,0,.25)"></div>
<div class="t" style="left:844.88px;top:30.26px;font-size:11.63px;transform:scaleX(0.7800);color:#1e1e1e;font-weight:bold;">Yellow</div>
<div class="t" style="left:844.70px;top:42.16px;font-size:11.63px;transform:scaleX(0.7800);color:#1e1e1e;font-weight:bold;">Green</div>
<div class="a" style="left:886.1px;top:7.8px;width:50px;height:49px;border-radius:4px 4px 0 0;background:linear-gradient(#a9a9a9,#7c7c7c 55%,#6c6c6c)"></div>
<div class="a" style="left:891.3px;top:13.3px;width:40px;height:12.1px;border-radius:3px;background:#e0a32e;box-shadow:inset 1px 1px 1px rgba(0,0,0,.25)"></div>
<div class="t" style="left:895.18px;top:30.26px;font-size:11.63px;transform:scaleX(0.7800);color:#1e1e1e;font-weight:bold;">Orange</div>
<div class="t" style="left:895.36px;top:42.16px;font-size:11.63px;transform:scaleX(0.7800);color:#1e1e1e;font-weight:bold;">Yellow</div>
<div class="a" style="left:938.1px;top:7.8px;width:50px;height:49px;border-radius:4px 4px 0 0;background:linear-gradient(#a9a9a9,#7c7c7c 55%,#6c6c6c)"></div>
<div class="a" style="left:943.3px;top:13.3px;width:40px;height:23.4px;border-radius:3px;background:#3a3d96;box-shadow:inset 1px 1px 1px rgba(0,0,0,.25)"></div>
<div class="t" style="left:952.87px;top:42.06px;font-size:11.63px;transform:scaleX(0.8000);color:#1e1e1e;font-weight:bold;">Blue</div>
<div class="a" style="left:990.1px;top:7.8px;width:50px;height:49px;border-radius:4px 4px 0 0;background:linear-gradient(#a9a9a9,#7c7c7c 55%,#6c6c6c)"></div>
<div class="a" style="left:995.3px;top:13.3px;width:40px;height:23.4px;border-radius:3px;background:#479548;box-shadow:inset 1px 1px 1px rgba(0,0,0,.25)"></div>
<div class="t" style="left:1001.75px;top:42.06px;font-size:11.63px;transform:scaleX(0.8000);color:#1e1e1e;font-weight:bold;">Green</div>
<div class="a" style="left:1042.1px;top:7.8px;width:50px;height:49px;border-radius:4px 4px 0 0;background:linear-gradient(#a9a9a9,#7c7c7c 55%,#6c6c6c)"></div>
<div class="a" style="left:1047.3px;top:13.3px;width:40px;height:23.4px;border-radius:3px;background:#b02a3a;box-shadow:inset 1px 1px 1px rgba(0,0,0,.25)"></div>
<div class="t" style="left:1058.31px;top:42.06px;font-size:11.63px;transform:scaleX(0.8000);color:#1e1e1e;font-weight:bold;">Red</div>
<div class="a" style="left:1094.1px;top:7.8px;width:50px;height:49px;border-radius:4px 4px 0 0;background:linear-gradient(#a9a9a9,#7c7c7c 55%,#6c6c6c)"></div>
<div class="a" style="left:1099.3px;top:13.3px;width:40px;height:23.4px;border-radius:3px;background:#e6c81e;box-shadow:inset 1px 1px 1px rgba(0,0,0,.25)"></div>
<div class="t" style="left:1104.52px;top:42.06px;font-size:11.63px;transform:scaleX(0.8000);color:#1e1e1e;font-weight:bold;">Yellow</div>
<div class="a" style="left:1146.1px;top:7.8px;width:50px;height:49px;border-radius:4px 4px 0 0;background:linear-gradient(#a9a9a9,#7c7c7c 55%,#6c6c6c)"></div>
<div class="a" style="left:1151.3px;top:13.3px;width:40px;height:23.4px;border-radius:3px;background:#bb5695;box-shadow:inset 1px 1px 1px rgba(0,0,0,.25)"></div>
<div class="t" style="left:1151.89px;top:42.06px;font-size:11.63px;transform:scaleX(0.8000);color:#1e1e1e;font-weight:bold;">Magenta</div>
<div class="a" style="left:1198.1px;top:7.8px;width:50px;height:49px;border-radius:4px 4px 0 0;background:linear-gradient(#a9a9a9,#7c7c7c 55%,#6c6c6c)"></div>
<div class="a" style="left:1203.3px;top:13.3px;width:40px;height:23.4px;border-radius:3px;background:#0885a1;box-shadow:inset 1px 1px 1px rgba(0,0,0,.25)"></div>
<div class="t" style="left:1211.82px;top:42.06px;font-size:11.63px;transform:scaleX(0.8000);color:#1e1e1e;font-weight:bold;">Cyan</div>
<div class="a" style="left:1250.1px;top:7.8px;width:50px;height:49px;border-radius:4px 4px 0 0;background:linear-gradient(#a9a9a9,#7c7c7c 55%,#6c6c6c)"></div>
<div class="a" style="left:1255.3px;top:13.3px;width:40px;height:23.4px;border-radius:3px;background:#ff0000;box-shadow:inset 1px 1px 1px rgba(0,0,0,.25)"></div>
<div class="t" style="left:1253.15px;top:42.06px;font-size:11.63px;transform:scaleX(0.8000);color:#1e1e1e;font-weight:bold;">100% Red</div>
<div class="a" style="left:1302.1px;top:7.8px;width:50px;height:49px;border-radius:4px 4px 0 0;background:linear-gradient(#a9a9a9,#7c7c7c 55%,#6c6c6c)"></div>
<div class="a" style="left:1307.3px;top:13.3px;width:40px;height:12.1px;border-radius:3px;background:#00ff00;box-shadow:inset 1px 1px 1px rgba(0,0,0,.25)"></div>
<div class="t" style="left:1313.90px;top:30.26px;font-size:11.63px;transform:scaleX(0.7800);color:#1e1e1e;font-weight:bold;">100%</div>
<div class="t" style="left:1314.08px;top:42.16px;font-size:11.63px;transform:scaleX(0.7800);color:#1e1e1e;font-weight:bold;">Green</div>
<div class="a" style="left:1354.1px;top:7.8px;width:50px;height:49px;border-radius:4px 4px 0 0;background:linear-gradient(#a9a9a9,#7c7c7c 55%,#6c6c6c)"></div>
<div class="a" style="left:1359.3px;top:13.3px;width:40px;height:12.1px;border-radius:3px;background:#0000ff;box-shadow:inset 1px 1px 1px rgba(0,0,0,.25)"></div>
<div class="t" style="left:1367.33px;top:30.26px;font-size:11.63px;transform:scaleX(0.7800);color:#1e1e1e;font-weight:bold;">100%</div>
<div class="t" style="left:1367.29px;top:42.16px;font-size:11.63px;transform:scaleX(0.7800);color:#1e1e1e;font-weight:bold;">Blue</div>
</div>
<div style="position:absolute;left:201px;top:1158px;width:1394px;height:10.5px;background:#5c5c5c"></div>
<div style="position:absolute;left:214px;top:1158.8px;width:780px;height:9px;background:#444;border-radius:5px"></div>
<svg class="a" style="left:200px;top:1157px" width="1400" height="13"><rect x="1" y="1" width="11" height="10.5" rx="2" fill="#7c7c7c"/><path d="M4 6.2 L9 2.5 V10Z" fill="#444"/><rect x="1385" y="0.5" width="10" height="10.5" rx="2" fill="#7c7c7c"/><path d="M1392.5 5.7 L1388 2.5 V9Z" fill="#444"/></svg>
<div style="position:absolute;left:1597.3px;top:1102.5px;width:322.7px;height:67.5px;background:#3a3a3a"></div>
<div style="position:absolute;left:1597.3px;top:1126.8px;width:47.4px;height:43.2px;background:linear-gradient(#9c9c9c,#777);border-radius:5px 5px 0 0"></div>
<svg class="a" style="left:1597px;top:1126px" width="48" height="44"><rect x="8.5" y="6.5" width="30" height="30" rx="5" fill="none" stroke="#111" stroke-width="2.6"/><rect x="17" y="14.8" width="13.5" height="13.6" fill="#000"/></svg>
<div style="position:absolute;left:1645.7px;top:1103.3px;width:181.5px;height:34.4px;background:linear-gradient(#8a8a8a,#666)"></div>
<div style="position:absolute;left:1827.3px;top:1103.3px;width:92.7px;height:34.4px;background:#3a3a3a"></div>
<div style="position:absolute;left:1692.6px;top:1103.3px;width:1px;height:34.4px;background:#2a2a2a"></div>
<div style="position:absolute;left:1737.2px;top:1103.3px;width:1px;height:34.4px;background:#2a2a2a"></div>
<div style="position:absolute;left:1782.5px;top:1103.3px;width:1px;height:34.4px;background:#2a2a2a"></div>
<div style="position:absolute;left:1873px;top:1103.3px;width:1px;height:34.4px;background:#2a2a2a"></div>
<svg class="a" style="left:1640px;top:1100px" width="280" height="40"><defs><radialGradient id="icg" cx=".5" cy=".7" r=".6"><stop offset="0" stop-color="#9a9a9a"/><stop offset="1" stop-color="#6a6a6a"/></radialGradient><radialGradient id="icd" cx=".5" cy=".7" r=".6"><stop offset="0" stop-color="#4a4a4a"/><stop offset="1" stop-color="#333"/></radialGradient></defs><circle cx="29" cy="22" r="9.5" fill="url(#icg)"/><circle cx="75" cy="22" r="9.5" fill="url(#icg)"/><circle cx="120" cy="22" r="9.5" fill="url(#icg)"/><circle cx="165" cy="22" r="9.5" fill="url(#icg)"/><circle cx="210" cy="22" r="9.5" fill="url(#icd)"/><circle cx="256" cy="22" r="9.5" fill="url(#icd)"/></svg>
<div style="position:absolute;left:1646.25px;top:1138.75px;width:136.25px;height:29.65px;background:linear-gradient(#b0b0b0,#8c8c8c 50%,#7a7a7a);border-radius:6px 0 0 6px"></div>
<div style="position:absolute;left:1782.5px;top:1138.75px;width:135.9px;height:29.65px;background:linear-gradient(#b0b0b0,#8c8c8c 50%,#7a7a7a);border-radius:0 6px 6px 0;border-left:1px solid #333;box-sizing:border-box"></div>
<svg class="a" style="left:1646px;top:1138px" width="274" height="32"><defs><radialGradient id="bb" cx=".5" cy=".35" r=".6"><stop offset="0" stop-color="#aaa"/><stop offset="1" stop-color="#7a7a7a"/></radialGradient></defs><circle cx="31" cy="15.3" r="9.5" fill="url(#bb)"/><circle cx="243.8" cy="15.9" r="9.8" fill="url(#bb)"/><path d="M31 10.5 L27 15.3 L31 20 M35 10.5 L31 15.3 L35 20" stroke="#222" stroke-width="1.6" fill="none"/><path d="M240.5 11 L244.5 15.9 L240.5 20.5 M244.5 11 L248.5 15.9 L244.5 20.5" stroke="#222" stroke-width="1.6" fill="none"/></svg>
<div class="t" style="left:1702.15px;top:1143.12px;font-size:21.95px;transform:scaleX(1.0515);color:#2e2e2e;">Back</div>
<div class="t" style="left:1809.02px;top:1142.38px;font-size:22.82px;transform:scaleX(1.1367);color:#2e2e2e;">Next</div>
<svg class="a" style="left:1520px;top:1075px" width="120" height="95" viewBox="1520 1075 120 95"><g fill="none" stroke-linejoin="round" stroke-linecap="round"><path d="M1548 1131.5 L1587.5 1128 L1584 1102 L1536 1090 L1541 1137 L1569 1152.5 L1621 1136 L1593 1130" stroke="#fff" stroke-opacity=".45" stroke-width="8.5"/><path d="M1548 1131.5 L1587.5 1128 L1584 1102 L1536 1090 L1541 1137 L1569 1152.5 L1621 1136 L1593 1130" stroke="#a32a2a" stroke-opacity=".62" stroke-width="5"/><path d="M1550 1106 L1565 1123 L1592 1088" stroke="#fff" stroke-opacity=".5" stroke-width="6.5"/><path d="M1550 1106 L1565 1123 L1592 1088" stroke="#2e2e2e" stroke-opacity=".8" stroke-width="3.2"/></g></svg>
<div class="t" style="left:1591.76px;top:1094.64px;font-size:36.34px;transform:scaleX(0.9463);color:rgba(160,36,36,.62);font-weight:bold;-webkit-text-stroke:1.4px rgba(255,255,255,.5);">NOTEBOOK</div>
<div class="t" style="left:1790.66px;top:1094.64px;font-size:36.34px;transform:scaleX(0.9186);color:rgba(35,35,35,.72);font-weight:bold;-webkit-text-stroke:1.4px rgba(255,255,255,.5);">CHECK</div>
</body></html>
